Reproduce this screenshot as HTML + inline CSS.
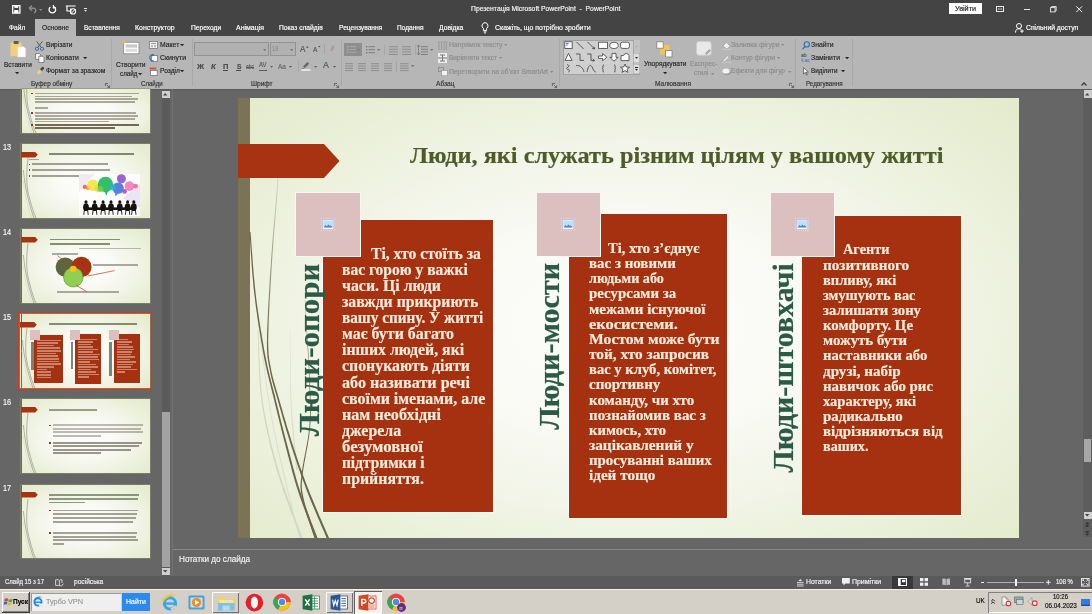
<!DOCTYPE html><html><head><meta charset="utf-8"><title>PowerPoint</title><style>
html,body{margin:0;padding:0}
body{width:1092px;height:614px;overflow:hidden;position:relative;background:#666;font-family:"Liberation Sans",sans-serif}
.a{position:absolute}
.t{position:absolute;white-space:nowrap;transform-origin:0 50%;-webkit-text-stroke:.18px currentColor}
svg{position:absolute;overflow:visible}
</style></head><body><div class="a" style="left:0px;top:0px;width:1092px;height:36px;background:#444;"></div><div class="a" style="left:0px;top:36px;width:1092px;height:52.5px;background:#b6b6b6;"></div><div class="a" style="left:35px;top:19px;width:41.3px;height:17.5px;background:#b6b6b6;"></div><div class="a" style="left:0px;top:88.5px;width:1092px;height:1px;background:#5a5a5a;"></div><div class="a" style="left:161.5px;top:89px;width:8px;height:487px;background:#5b5b5b;"></div><div class="a" style="left:161.5px;top:412px;width:8px;height:155px;background:#a2a2a2;"></div><div class="a" style="left:171.5px;top:89px;width:1.5px;height:487px;background:#727272;"></div><div class="a" style="left:1083px;top:89px;width:8.5px;height:448px;background:#5d5d5d;"></div><div class="a" style="left:1083.5px;top:439px;width:7.5px;height:23px;background:#a8a8a8;"></div><div class="a" style="left:173px;top:549px;width:919px;height:1px;background:#8a8a8a;"></div><div class="a" style="left:0px;top:576px;width:1092px;height:13px;background:#5a5a5a;"></div><div class="a" style="left:0px;top:589px;width:1092px;height:25px;background:#d4d0c8;"></div><div class="a" style="left:0px;top:589px;width:1092px;height:1px;background:#f4f2ee;"></div><div class="a" id="slide" style="left:238px;top:98px;width:781px;height:440px;overflow:hidden;background:radial-gradient(ellipse 60% 62% at 50% 52%,#fcfcfa 0%,#fafbf6 35%,#f1f4e6 68%,#e8eed4 100%,#e2e9c8 125%)"><div class="a" style="left:0;top:0;width:12px;height:440px;background:#7a7356"></div><svg style="left:0;top:0" width="781" height="440"><polygon points="19.7,232.0 19.8,234.9 19.9,238.4 20.0,242.4 20.1,247.0 20.2,251.9 20.4,257.2 20.6,262.8 20.8,268.5 21.1,274.3 21.4,280.1 21.8,285.9 22.2,291.5 22.8,297.0 23.4,302.1 24.1,307.0 24.9,311.9 25.7,316.8 26.6,321.7 27.5,326.5 28.5,331.4 29.6,336.2 30.7,341.1 31.8,345.9 33.0,350.7 34.3,355.6 35.5,360.5 36.9,365.3 38.2,370.2 39.7,375.3 41.4,380.6 43.2,386.1 45.0,391.7 47.0,397.4 49.0,403.0 51.0,408.5 52.9,413.9 54.8,419.1 56.6,424.0 58.3,428.5 59.8,432.7 61.1,436.3 62.1,439.3 62.9,441.8 63.5,443.7 64.0,445.2 64.3,446.2 64.4,446.9 64.5,447.2 64.5,447.0 65.9,446.4 66.1,446.5 66.1,446.4 65.9,446.3 65.7,445.9 63.9,446.8 63.9,447.2 66.1,446.8 66.1,446.9 64.4,447.7 64.3,447.6 64.4,447.7 64.5,447.9 65.0,448.3 66.5,447.6 66.5,447.0 66.4,446.5 66.2,445.7 65.9,444.6 65.4,443.1 64.7,441.2 63.9,438.7 62.8,435.6 61.5,432.0 60.0,427.9 58.3,423.4 56.5,418.5 54.6,413.3 52.6,408.0 50.6,402.4 48.6,396.8 46.6,391.1 44.7,385.6 42.9,380.1 41.3,374.8 39.8,369.8 38.4,364.9 37.0,360.0 35.7,355.2 34.5,350.4 33.2,345.5 32.1,340.7 30.9,335.9 29.9,331.1 28.8,326.3 27.9,321.4 27.0,316.6 26.1,311.7 25.3,306.8 24.6,301.9 24.0,296.8 23.4,291.4 22.9,285.8 22.5,280.1 22.1,274.2 21.8,268.4 21.5,262.7 21.3,257.2 21.1,251.9 21.0,246.9 20.8,242.4 20.6,238.3 20.5,234.8 20.3,232.0" fill="#cdd1bd" opacity="0.85"/><polygon points="12.8,148.0 13.0,150.2 13.2,152.9 13.5,156.1 13.8,159.6 14.1,163.5 14.5,167.6 14.9,171.9 15.3,176.3 15.7,180.8 16.1,185.3 16.5,189.7 16.9,194.1 17.3,198.2 17.7,202.0 18.1,205.7 18.5,209.2 18.8,212.7 19.2,216.0 19.6,219.4 20.0,222.7 20.3,226.0 20.7,229.4 21.2,232.9 21.6,236.4 22.1,240.1 22.5,243.9 23.1,247.9 23.6,252.1 24.2,256.4 24.7,260.9 25.3,265.5 25.9,270.3 26.5,275.2 27.1,280.1 27.8,285.2 28.5,290.3 29.2,295.5 30.0,300.8 30.8,306.1 31.6,311.4 32.5,316.7 33.5,322.1 34.6,327.6 35.7,333.4 37.0,339.3 38.3,345.5 39.6,351.7 41.0,357.9 42.5,364.1 43.9,370.3 45.3,376.2 46.7,382.0 48.0,387.6 49.2,392.8 50.4,397.7 51.4,402.1 52.4,406.2 53.3,410.1 54.3,413.8 55.1,417.2 56.0,420.4 56.7,423.4 57.5,426.2 58.2,428.8 58.9,431.1 59.5,433.3 60.0,435.3 60.5,437.1 60.9,438.7 61.3,440.2 62.7,439.8 62.3,438.4 61.8,436.7 61.3,434.9 60.8,433.0 60.1,430.8 59.5,428.4 58.8,425.8 58.0,423.1 57.2,420.1 56.3,416.9 55.5,413.5 54.5,409.8 53.6,406.0 52.6,401.9 51.5,397.4 50.3,392.6 49.1,387.3 47.8,381.8 46.4,376.0 45.0,370.0 43.5,363.9 42.1,357.7 40.7,351.4 39.3,345.2 38.0,339.1 36.7,333.2 35.6,327.4 34.5,321.9 33.5,316.6 32.6,311.2 31.7,305.9 30.9,300.6 30.1,295.4 29.4,290.2 28.7,285.1 28.0,280.0 27.4,275.1 26.8,270.2 26.2,265.4 25.6,260.8 25.0,256.3 24.4,251.9 23.8,247.8 23.3,243.8 22.8,240.0 22.3,236.3 21.9,232.8 21.5,229.3 21.0,226.0 20.6,222.6 20.2,219.3 19.9,216.0 19.5,212.6 19.1,209.1 18.7,205.6 18.3,202.0 17.9,198.1 17.5,194.0 17.0,189.7 16.6,185.3 16.2,180.8 15.8,176.3 15.4,171.9 15.0,167.6 14.6,163.4 14.3,159.6 13.9,156.1 13.7,152.9 13.4,150.2 13.2,148.0" fill="#d8dbcb" opacity="0.8"/><polygon points="51.9,232.0 51.9,234.9 51.9,238.6 51.9,242.9 51.9,247.8 52.0,253.1 52.0,258.7 52.1,264.5 52.1,270.4 52.2,276.3 52.2,282.2 52.3,287.7 52.4,293.0 52.5,297.8 52.6,302.0 52.8,305.8 52.9,309.4 53.1,312.8 53.3,315.9 53.5,318.9 53.7,321.8 53.9,324.5 54.1,327.2 54.3,329.7 54.6,332.2 54.8,334.7 55.0,337.1 55.2,339.6 55.4,342.1 55.6,344.6 55.8,347.1 56.1,349.7 56.3,352.2 56.5,354.7 56.8,357.2 57.0,359.6 57.2,361.8 57.4,364.0 57.6,366.0 57.8,367.8 58.0,369.5 58.1,370.9 58.2,372.1 59.8,371.9 59.7,370.7 59.5,369.3 59.3,367.7 59.1,365.8 58.9,363.8 58.6,361.7 58.4,359.4 58.1,357.1 57.9,354.6 57.6,352.1 57.3,349.6 57.1,347.0 56.8,344.5 56.6,341.9 56.3,339.5 56.1,337.0 55.9,334.6 55.6,332.1 55.4,329.6 55.1,327.1 54.8,324.5 54.6,321.7 54.4,318.9 54.1,315.9 53.9,312.7 53.7,309.4 53.5,305.8 53.4,302.0 53.2,297.7 53.1,293.0 53.0,287.7 52.8,282.1 52.7,276.3 52.7,270.4 52.6,264.5 52.5,258.7 52.4,253.1 52.4,247.8 52.3,242.9 52.3,238.6 52.2,234.9 52.1,232.0" fill="#d3d7c6" opacity="0.8"/><polygon points="66.9,202.0 67.0,205.3 67.3,209.5 67.6,214.5 67.9,220.0 68.3,226.0 68.6,232.4 69.0,239.1 69.4,245.8 69.8,252.6 70.1,259.2 70.5,265.6 70.8,271.6 71.0,277.1 71.2,282.0 71.4,286.4 71.5,290.4 71.6,294.2 71.8,297.8 71.9,301.2 71.9,304.4 72.0,307.5 72.0,310.5 72.0,313.5 72.0,316.5 71.9,319.4 71.7,322.5 71.5,325.7 71.3,329.0 70.9,332.4 70.5,336.0 70.0,339.6 69.4,343.3 68.7,347.0 68.0,350.7 67.3,354.4 66.6,358.0 65.9,361.6 65.3,365.0 64.7,368.3 64.2,371.4 63.7,374.3 63.4,376.9 63.2,379.3 63.0,381.4 62.8,383.2 62.7,384.9 62.6,386.4 62.5,387.8 62.5,389.1 62.6,390.4 62.7,391.7 62.8,393.1 63.0,394.6 63.3,396.2 63.7,398.1 64.1,400.2 64.6,402.5 65.3,405.2 66.1,408.1 67.0,411.1 68.0,414.2 69.0,417.5 70.0,420.7 71.1,423.9 72.1,427.0 73.1,429.9 74.0,432.7 74.8,435.2 75.6,437.4 76.2,439.3 76.7,440.8 77.1,442.1 77.5,443.2 77.8,444.1 78.0,444.8 78.2,445.4 78.4,445.8 78.6,446.2 78.7,446.4 78.8,446.6 78.9,446.8 78.9,447.0 79.0,447.1 79.1,447.4 80.9,446.6 80.8,446.4 80.7,446.1 80.6,445.9 80.5,445.8 80.4,445.6 80.3,445.4 80.1,445.1 79.9,444.7 79.7,444.1 79.5,443.5 79.1,442.6 78.8,441.6 78.3,440.3 77.8,438.7 77.2,436.9 76.4,434.6 75.6,432.1 74.6,429.4 73.6,426.4 72.6,423.4 71.5,420.2 70.5,417.0 69.4,413.8 68.4,410.7 67.5,407.7 66.7,404.8 66.0,402.2 65.5,399.8 65.1,397.8 64.7,396.0 64.4,394.4 64.2,392.9 64.0,391.6 63.9,390.3 63.8,389.0 63.8,387.8 63.8,386.4 63.9,385.0 64.0,383.3 64.2,381.5 64.4,379.4 64.6,377.1 64.9,374.4 65.3,371.5 65.8,368.4 66.3,365.2 67.0,361.8 67.6,358.2 68.3,354.6 69.0,350.9 69.7,347.2 70.3,343.4 70.9,339.7 71.4,336.1 71.8,332.5 72.1,329.0 72.4,325.7 72.5,322.5 72.7,319.5 72.7,316.5 72.8,313.5 72.8,310.5 72.7,307.5 72.7,304.4 72.6,301.2 72.4,297.8 72.3,294.2 72.1,290.4 72.0,286.4 71.8,282.0 71.6,277.1 71.3,271.6 71.0,265.6 70.6,259.2 70.3,252.6 69.9,245.8 69.5,239.0 69.0,232.4 68.7,226.0 68.3,220.0 67.9,214.4 67.6,209.5 67.4,205.3 67.1,202.0" fill="#6b6649" opacity="1"/><polygon points="11.5,134.0 11.7,136.6 11.9,139.6 12.1,143.2 12.3,147.2 12.6,151.6 12.9,156.3 13.3,161.2 13.6,166.2 14.0,171.4 14.4,176.5 14.9,181.7 15.3,186.7 15.8,191.5 16.3,196.1 16.9,200.6 17.4,205.1 18.0,209.7 18.7,214.3 19.3,219.0 20.0,223.6 20.7,228.2 21.5,232.8 22.2,237.3 22.9,241.7 23.7,246.0 24.4,250.2 25.1,254.3 25.8,258.1 26.5,261.8 27.3,265.4 28.0,268.8 28.7,272.0 29.4,275.2 30.2,278.2 30.9,281.2 31.6,284.2 32.4,287.1 33.1,290.1 33.9,293.0 34.6,296.0 35.4,299.1 36.2,302.2 36.9,305.4 37.7,308.6 38.5,311.9 39.3,315.1 40.1,318.4 40.9,321.6 41.7,324.9 42.5,328.1 43.3,331.4 44.1,334.7 45.0,338.0 45.8,341.2 46.7,344.5 47.5,347.7 48.3,351.0 49.2,354.2 50.0,357.5 50.9,360.7 51.7,364.0 52.6,367.2 53.4,370.5 54.3,373.7 55.2,377.0 56.1,380.2 57.0,383.5 58.0,386.8 59.0,390.0 60.1,393.3 61.2,396.7 62.4,400.2 63.7,403.8 65.0,407.6 66.4,411.3 67.8,415.0 69.1,418.7 70.5,422.3 71.8,425.7 73.1,429.0 74.2,432.0 75.3,434.8 76.2,437.3 77.0,439.4 77.7,441.1 78.2,442.6 78.6,443.7 79.0,444.7 79.2,445.4 79.4,445.9 79.6,446.3 79.7,446.5 79.7,446.7 79.8,446.8 79.8,446.9 79.8,447.0 79.9,447.2 80.0,447.4 82.0,446.6 81.9,446.4 81.9,446.2 81.8,446.1 81.8,446.0 81.7,445.9 81.7,445.7 81.6,445.5 81.4,445.1 81.2,444.6 81.0,443.9 80.6,443.0 80.2,441.8 79.6,440.4 79.0,438.6 78.2,436.5 77.2,434.0 76.2,431.3 75.0,428.2 73.7,425.0 72.4,421.6 71.1,418.0 69.7,414.3 68.3,410.6 66.9,406.9 65.5,403.2 64.3,399.5 63.1,396.0 61.9,392.7 60.9,389.4 59.9,386.2 58.9,382.9 58.0,379.7 57.1,376.5 56.2,373.2 55.3,370.0 54.4,366.7 53.6,363.5 52.7,360.2 51.9,357.0 51.0,353.8 50.2,350.5 49.3,347.3 48.4,344.0 47.6,340.8 46.7,337.5 45.9,334.2 45.1,331.0 44.3,327.7 43.4,324.4 42.6,321.2 41.8,317.9 41.0,314.7 40.2,311.4 39.4,308.2 38.6,305.0 37.8,301.8 37.1,298.6 36.3,295.6 35.5,292.6 34.7,289.6 34.0,286.7 33.2,283.8 32.5,280.8 31.7,277.8 31.0,274.8 30.3,271.7 29.5,268.4 28.8,265.1 28.1,261.5 27.4,257.9 26.6,254.0 25.9,250.0 25.2,245.8 24.4,241.5 23.7,237.1 22.9,232.6 22.2,228.0 21.5,223.4 20.8,218.8 20.1,214.1 19.4,209.5 18.8,204.9 18.2,200.4 17.7,195.9 17.2,191.4 16.7,186.5 16.2,181.5 15.7,176.4 15.3,171.3 14.9,166.1 14.5,161.1 14.2,156.2 13.8,151.5 13.5,147.2 13.2,143.1 13.0,139.6 12.7,136.5 12.5,134.0" fill="#6b6649" opacity="1"/><defs><linearGradient id="gA" gradientUnits="userSpaceOnUse" x1="0" y1="80" x2="0" y2="250"><stop offset="0" stop-color="#cfd2c0"/><stop offset="1" stop-color="#6b6649"/></linearGradient></defs><polygon points="40.8,52.0 40.7,53.3 40.6,54.7 40.6,56.2 40.5,57.9 40.5,59.8 40.4,61.8 40.3,64.1 40.2,66.5 40.1,69.1 40.0,72.0 39.8,75.1 39.7,78.5 39.4,82.1 39.2,86.0 38.9,90.2 38.5,94.9 38.1,100.0 37.7,105.3 37.2,110.9 36.7,116.8 36.2,122.8 35.6,128.9 35.1,135.0 34.6,141.2 34.1,147.4 33.7,153.4 33.2,159.3 32.9,165.0 32.5,170.6 32.1,176.5 31.7,182.4 31.4,188.5 31.0,194.5 30.7,200.6 30.3,206.5 30.0,212.4 29.8,218.0 29.5,223.5 29.3,228.6 29.1,233.5 29.0,237.9 29.0,242.0 28.9,245.6 29.0,248.8 29.0,251.6 29.1,254.0 29.3,256.2 29.4,258.2 29.6,260.0 29.9,261.7 30.1,263.3 30.4,264.9 30.7,266.6 31.0,268.3 31.4,270.1 31.8,272.1 32.2,274.3 32.6,276.3 33.0,278.3 33.5,280.3 34.0,282.3 34.5,284.2 35.1,286.2 35.7,288.3 36.3,290.4 36.9,292.5 37.6,294.8 38.2,297.1 39.0,299.6 39.7,302.2 40.5,305.0 41.3,307.9 42.2,311.0 43.1,314.1 44.0,317.3 44.9,320.7 45.9,324.0 46.9,327.4 47.9,330.9 48.9,334.3 50.0,337.7 51.0,341.1 52.1,344.5 53.1,347.8 54.2,351.0 55.2,354.3 56.3,357.5 57.4,360.8 58.5,364.0 59.6,367.3 60.7,370.5 61.9,373.8 63.0,377.0 64.2,380.3 65.4,383.6 66.6,386.8 67.8,390.1 69.1,393.4 70.4,396.7 71.8,400.3 73.3,403.9 74.8,407.6 76.4,411.3 78.0,415.1 79.5,418.8 81.1,422.3 82.5,425.8 83.9,429.0 85.3,432.1 86.5,434.8 87.5,437.3 88.4,439.4 89.2,441.2 89.8,442.6 90.3,443.8 90.7,444.7 91.0,445.4 91.2,446.0 91.4,446.4 91.5,446.6 91.6,446.8 91.7,447.0 91.8,447.1 91.8,447.1 91.9,447.3 92.0,447.5 94.0,446.5 93.9,446.3 93.8,446.1 93.7,445.9 93.7,445.8 93.6,445.7 93.5,445.6 93.4,445.4 93.2,445.0 93.0,444.5 92.7,443.8 92.3,442.9 91.8,441.8 91.1,440.3 90.4,438.6 89.5,436.5 88.4,434.0 87.2,431.2 85.9,428.2 84.5,424.9 83.0,421.5 81.4,417.9 79.9,414.3 78.3,410.6 76.7,406.8 75.2,403.1 73.7,399.5 72.2,396.0 70.9,392.6 69.7,389.4 68.4,386.1 67.2,382.9 66.0,379.6 64.8,376.4 63.7,373.1 62.5,369.9 61.4,366.7 60.3,363.4 59.2,360.2 58.1,356.9 57.0,353.7 55.9,350.5 54.9,347.2 53.8,343.9 52.8,340.6 51.7,337.2 50.7,333.8 49.6,330.4 48.6,326.9 47.6,323.5 46.6,320.2 45.6,316.9 44.7,313.6 43.8,310.5 42.9,307.5 42.1,304.5 41.3,301.8 40.5,299.2 39.8,296.7 39.1,294.3 38.4,292.1 37.8,289.9 37.2,287.8 36.6,285.8 36.0,283.8 35.5,281.9 35.0,279.9 34.5,278.0 34.1,276.0 33.6,274.0 33.2,271.9 32.8,269.8 32.5,268.0 32.1,266.3 31.8,264.7 31.5,263.1 31.2,261.5 31.0,259.8 30.8,258.1 30.6,256.1 30.5,254.0 30.4,251.5 30.3,248.7 30.2,245.6 30.2,242.0 30.3,238.0 30.4,233.5 30.6,228.7 30.7,223.5 31.0,218.1 31.2,212.4 31.5,206.6 31.8,200.6 32.2,194.6 32.5,188.5 32.9,182.5 33.2,176.6 33.6,170.7 33.9,165.0 34.3,159.3 34.7,153.5 35.2,147.4 35.6,141.3 36.1,135.1 36.6,129.0 37.1,122.9 37.6,116.9 38.1,111.0 38.6,105.4 39.0,100.0 39.4,95.0 39.7,90.3 40.0,86.0 40.3,82.1 40.5,78.5 40.6,75.1 40.8,72.0 40.9,69.2 41.0,66.5 41.0,64.1 41.1,61.8 41.1,59.8 41.2,57.9 41.2,56.2 41.2,54.7 41.2,53.3 41.2,52.0" fill="url(#gA)" opacity="1"/></svg><svg style="left:0;top:46px" width="102" height="34"><polygon points="0,0 86,0 101.5,17 86,34 0,34" fill="#a83312"/></svg><div class="a" style="left:85px;top:122px;width:170px;height:292px;background:#a63110;box-shadow:0 0 0 1px rgba(255,255,255,.75)"></div><div class="a" style="left:330.5px;top:116px;width:158.5px;height:304px;background:#a63110;box-shadow:0 0 0 1px rgba(255,255,255,.75)"></div><div class="a" style="left:564px;top:117.5px;width:159px;height:299.5px;background:#a63110;box-shadow:0 0 0 1px rgba(255,255,255,.75)"></div><div class="a" style="left:58px;top:95px;width:63.5px;height:62.5px;background:#dcc0c0;box-shadow:0 0 0 1px #fbf6f2"></div><svg style="left:82.5px;top:119.6px" width="14" height="13"><rect x="0.4" y="0.4" width="13.2" height="12.2" fill="none" stroke="#ece4ea" stroke-width="0.7" stroke-dasharray="1 1"/><rect x="1.4" y="1.6" width="11.4" height="10" fill="#f6f8fc" stroke="#b9b3c6" stroke-width="0.6"/><rect x="2.2" y="2.4" width="9.8" height="7" fill="#bfe0fa"/><path d="M2.6,9.4 L4.6,7 L5.8,8.2 L7.4,6.6 L8.6,8 L9.6,7.2 L11.6,9.4 Z" fill="#4a86cc"/></svg><div class="a" style="left:298.5px;top:95px;width:63.5px;height:62.5px;background:#dcc0c0;box-shadow:0 0 0 1px #fbf6f2"></div><svg style="left:323.0px;top:119.6px" width="14" height="13"><rect x="0.4" y="0.4" width="13.2" height="12.2" fill="none" stroke="#ece4ea" stroke-width="0.7" stroke-dasharray="1 1"/><rect x="1.4" y="1.6" width="11.4" height="10" fill="#f6f8fc" stroke="#b9b3c6" stroke-width="0.6"/><rect x="2.2" y="2.4" width="9.8" height="7" fill="#bfe0fa"/><path d="M2.6,9.4 L4.6,7 L5.8,8.2 L7.4,6.6 L8.6,8 L9.6,7.2 L11.6,9.4 Z" fill="#4a86cc"/></svg><div class="a" style="left:532.5px;top:95px;width:63.5px;height:62.5px;background:#dcc0c0;box-shadow:0 0 0 1px #fbf6f2"></div><svg style="left:557.0px;top:119.6px" width="14" height="13"><rect x="0.4" y="0.4" width="13.2" height="12.2" fill="none" stroke="#ece4ea" stroke-width="0.7" stroke-dasharray="1 1"/><rect x="1.4" y="1.6" width="11.4" height="10" fill="#f6f8fc" stroke="#b9b3c6" stroke-width="0.6"/><rect x="2.2" y="2.4" width="9.8" height="7" fill="#bfe0fa"/><path d="M2.6,9.4 L4.6,7 L5.8,8.2 L7.4,6.6 L8.6,8 L9.6,7.2 L11.6,9.4 Z" fill="#4a86cc"/></svg></div><div class="a" style="left:949px;top:3px;width:33px;height:11px;background:#fff;"></div><svg style="left:12.2px;top:5px" width="9" height="9"><path d="M0.7,0.7h7.2v7.4h-7.2z" fill="none" stroke="#fff" stroke-width="1.3"/><rect x="2.4" y="0.7" width="3.8" height="2.2" fill="#fff"/><rect x="2.2" y="5" width="4.2" height="3" fill="#fff"/></svg><svg style="left:28px;top:5px" width="10" height="8"><path d="M1,3.2 L4,0.6 M1,3.2 L4,5.8 M1,3.2 H6.2 A2.6,2.6 0 0 1 6.2,8" fill="none" stroke="#8a8a8a" stroke-width="1.4"/></svg><svg style="left:39.3px;top:9.0px" width="3.4" height="2"><polygon points="0,0 3.4,0 1.7,2" fill="#8a8a8a"/></svg><svg style="left:48.3px;top:5px" width="9" height="9"><path d="M2.4,2 A3.3,3.3 0 1 0 5.6,1.6" fill="none" stroke="#fff" stroke-width="1.3"/><path d="M5.4,0 V2.8 H8" fill="none" stroke="#fff" stroke-width="1.2"/></svg><svg style="left:64.6px;top:5.4px" width="11" height="9"><path d="M0.8,1 H10.6 M2,1 V6 H6.5 M5.6,3.6 V8.6" fill="none" stroke="#fff" stroke-width="1.2"/><circle cx="8" cy="6.4" r="2.6" fill="none" stroke="#fff" stroke-width="1.1"/><path d="M6,8.6 L10.4,4" stroke="#fff" stroke-width="1"/></svg><div class="a" style="left:84.3px;top:8px;width:3px;height:0.9px;background:#e8e8e8;"></div><svg style="left:84.3px;top:9.799999999999999px" width="3" height="1.8"><polygon points="0,0 3,0 1.5,1.8" fill="#e8e8e8"/></svg><svg style="left:481px;top:22px" width="8" height="12"><path d="M4,0.7 A3.1,3.1 0 0 1 5.6,6.4 V8.4 H2.4 V6.4 A3.1,3.1 0 0 1 4,0.7 Z" fill="none" stroke="#fff" stroke-width="1"/><path d="M2.6,9.8 H5.4 M3,11 H5" stroke="#fff" stroke-width="0.9"/></svg><svg style="left:996px;top:5.8px" width="8" height="6"><rect x="0.5" y="0.5" width="7" height="5" fill="none" stroke="#ececec" stroke-width="1"/><path d="M1.8,3 L3.3,1.9 V4.1 Z M6.2,3 L4.7,1.9 V4.1Z" fill="#ececec"/></svg><div class="a" style="left:1024px;top:9px;width:6px;height:1px;background:#e8e8e8;"></div><svg style="left:1049.6px;top:6px" width="7" height="6.4"><rect x="0.5" y="1.6" width="4.6" height="4.3" fill="none" stroke="#e8e8e8" stroke-width="0.9"/><path d="M1.7,1.6 V0.5 H6.2 V4.8 H5.1" fill="none" stroke="#e8e8e8" stroke-width="0.9"/></svg><svg style="left:1075.6px;top:6px" width="6.4" height="6.4"><path d="M0.3,0.3 L6.1,6.1 M6.1,0.3 L0.3,6.1" stroke="#f0f0f0" stroke-width="1"/></svg><svg style="left:1015px;top:22.5px" width="9" height="10"><circle cx="4" cy="3" r="2.5" fill="none" stroke="#fff" stroke-width="1"/><path d="M0.5,9.6 C0.5,6.6 2,5.8 4,5.8 C5,5.8 5.6,6 6,6.4" fill="none" stroke="#fff" stroke-width="1"/><path d="M7,6.4 V9.8 M5.3,8.1 H8.7" stroke="#fff" stroke-width="1"/></svg><svg style="left:1080.5px;top:82px" width="6" height="4"><path d="M0.5,3.5 L3,0.8 L5.5,3.5" fill="none" stroke="#333" stroke-width="1.2"/></svg><div class="a" style="left:111px;top:39px;width:1px;height:47px;background:#a8a8a8;"></div><div class="a" style="left:191.5px;top:39px;width:1px;height:47px;background:#a8a8a8;"></div><div class="a" style="left:341px;top:39px;width:1px;height:47px;background:#a8a8a8;"></div><div class="a" style="left:558.5px;top:39px;width:1px;height:47px;background:#a8a8a8;"></div><div class="a" style="left:795px;top:39px;width:1px;height:47px;background:#a8a8a8;"></div><div class="a" style="left:852px;top:39px;width:1px;height:47px;background:#a8a8a8;"></div><svg style="left:15.4px;top:72.30000000000001px" width="4.2" height="2.2"><polygon points="0,0 4.2,0 2.1,2.2" fill="#262626"/></svg><svg style="left:83.4px;top:57.199999999999996px" width="4.2" height="2.2"><polygon points="0,0 4.2,0 2.1,2.2" fill="#262626"/></svg><svg style="left:105px;top:82.5px" width="5" height="5"><path d="M0.4,3 V0.4 H3" fill="none" stroke="#555" stroke-width="0.8"/><path d="M1.8,1.8 L4.6,4.6 M4.6,2.4 V4.6 H2.4" fill="none" stroke="#555" stroke-width="0.8"/></svg><svg style="left:9px;top:40px" width="18" height="18"><rect x="1.5" y="2.6" width="11" height="13.6" rx="1" fill="#f3cf7a"/><rect x="4.6" y="1" width="5" height="3" rx="1" fill="#6b5a3a"/><path d="M8.6,6.4 H14.4 L16.6,8.6 V17 H8.6 Z" fill="#fff" stroke="#d8d8d8" stroke-width="0.5"/></svg><svg style="left:35px;top:40.5px" width="9" height="10"><path d="M1.6,0.4 L6.2,6.4 M7.4,0.4 L2.8,6.4" stroke="#5a5a5a" stroke-width="1"/><circle cx="2" cy="7.8" r="1.6" fill="none" stroke="#3a6fb0" stroke-width="1"/><circle cx="7" cy="7.8" r="1.6" fill="none" stroke="#3a6fb0" stroke-width="1"/></svg><svg style="left:34.5px;top:53px" width="10" height="10"><path d="M0.6,0.6 H4.4 L5.8,2 V6.4 H0.6 Z" fill="#fff" stroke="#666" stroke-width="0.8"/><path d="M3.8,3.2 H7.6 L9,4.6 V9.4 H3.8 Z" fill="#fff" stroke="#666" stroke-width="0.8"/></svg><svg style="left:35.5px;top:66px" width="9" height="10"><path d="M0.6,6.4 L3.2,3.8 L5.4,6 L2.8,8.6 Z" fill="#f3cf7a"/><path d="M4,3 L6.8,0.6 L8.4,2.2 L6,5 Z" fill="#444"/></svg><svg style="left:138.20000000000002px;top:72.9px" width="4.2" height="2.2"><polygon points="0,0 4.2,0 2.1,2.2" fill="#262626"/></svg><svg style="left:179.70000000000002px;top:44.199999999999996px" width="4.2" height="2.2"><polygon points="0,0 4.2,0 2.1,2.2" fill="#262626"/></svg><svg style="left:180.20000000000002px;top:70.4px" width="4.2" height="2.2"><polygon points="0,0 4.2,0 2.1,2.2" fill="#262626"/></svg><svg style="left:121.5px;top:40px" width="18" height="15"><rect x="1.6" y="2.2" width="15.4" height="11.6" fill="#fff" stroke="#8e8e8e" stroke-width="0.9"/><rect x="3.6" y="4.4" width="11.4" height="3.2" fill="#c9c9c9"/><rect x="3.6" y="8.8" width="11.4" height="3" fill="#dcdcdc"/><path d="M2,0 V4 M0,2 H4" stroke="#f0b94a" stroke-width="1.2"/></svg><svg style="left:149px;top:40.5px" width="9" height="8"><rect x="0.5" y="0.5" width="8" height="7" fill="#fff" stroke="#777" stroke-width="0.8"/><rect x="1.8" y="1.8" width="5.4" height="1.4" fill="#999"/><rect x="1.8" y="4" width="2.2" height="2.4" fill="#bbb"/><rect x="5" y="4" width="2.2" height="2.4" fill="#bbb"/></svg><svg style="left:149px;top:53.5px" width="9" height="8"><rect x="2.4" y="1.6" width="6.2" height="5.8" fill="#fff" stroke="#777" stroke-width="0.8"/><path d="M4.4,0.8 A3,3 0 1 0 4.6,6.6" fill="none" stroke="#2f6fb5" stroke-width="1.2"/><path d="M3,0 L5.4,0.8 L3.6,2.6Z" fill="#2f6fb5"/></svg><svg style="left:149px;top:66.5px" width="9" height="9"><rect x="0.5" y="0.5" width="6.8" height="2" fill="#d3562e"/><rect x="1.4" y="3.4" width="6.8" height="5" fill="#fff" stroke="#777" stroke-width="0.8"/></svg><div class="a" style="left:194px;top:42px;width:75px;height:13.5px;background:#b1b1b1;box-shadow:inset 0 0 0 1px #939393"></div><div class="a" style="left:270px;top:42px;width:25.5px;height:13.5px;background:#b1b1b1;box-shadow:inset 0 0 0 1px #939393"></div><svg style="left:263.3px;top:48.75px" width="3.4" height="1.9"><polygon points="0,0 3.4,0 1.7,1.9" fill="#777"/></svg><svg style="left:289.6px;top:48.75px" width="3.4" height="1.9"><polygon points="0,0 3.4,0 1.7,1.9" fill="#777"/></svg><svg style="left:305.6px;top:45.6px" width="2.6" height="1.8"><polygon points="0,1.8 1.3,0 2.6,1.8" fill="#555"/></svg><svg style="left:317.7px;top:45.7px" width="2.6" height="1.6"><polygon points="0,0 2.6,0 1.3,1.6" fill="#555"/></svg><div class="a" style="left:323.6px;top:44px;width:0.8px;height:10px;background:#a6a6a6;"></div><svg style="left:328.5px;top:44.6px" width="7" height="7"><path d="M1,5.4 L3.6,0.4 L5.2,0.4 L3.4,5.4 Z" fill="#9b9b9b"/><path d="M2.4,6.4 L6,2.6" stroke="#c99" stroke-width="1"/></svg><div class="a" style="left:223px;top:70px;width:5.4px;height:0.8px;background:#4c4c4c;"></div><div class="a" style="left:236.4px;top:70px;width:5px;height:0.8px;background:#4c4c4c;"></div><div class="a" style="left:246.4px;top:66.8px;width:8.1px;height:0.7px;background:#5c5c5c;"></div><div class="a" style="left:259.4px;top:69.6px;width:7.6px;height:0.7px;background:#5c5c5c;"></div><svg style="left:269.7px;top:65.69999999999999px" width="3.2" height="1.8"><polygon points="0,0 3.2,0 1.6,1.8" fill="#5c5c5c"/></svg><svg style="left:288.79999999999995px;top:65.69999999999999px" width="3.2" height="1.8"><polygon points="0,0 3.2,0 1.6,1.8" fill="#5c5c5c"/></svg><div class="a" style="left:298px;top:61px;width:0.8px;height:11px;background:#a6a6a6;"></div><svg style="left:301.4px;top:61px" width="10" height="10"><path d="M2,5.4 L6.4,1 L8.2,2.8 L3.8,7.2 Z" fill="#6a6a6a"/><path d="M1.4,6.4 L3,7.8 L1,8.2Z" fill="#6a6a6a"/><rect x="0.4" y="8.2" width="9" height="1.7" fill="#ececec"/></svg><svg style="left:314.0px;top:65.69999999999999px" width="3.2" height="1.8"><polygon points="0,0 3.2,0 1.6,1.8" fill="#5c5c5c"/></svg><svg style="left:333.2px;top:65.69999999999999px" width="3.2" height="1.8"><polygon points="0,0 3.2,0 1.6,1.8" fill="#5c5c5c"/></svg><svg style="left:334.3px;top:82.5px" width="5" height="5"><path d="M0.4,3 V0.4 H3" fill="none" stroke="#555" stroke-width="0.8"/><path d="M1.8,1.8 L4.6,4.6 M4.6,2.4 V4.6 H2.4" fill="none" stroke="#555" stroke-width="0.8"/></svg><div class="a" style="left:344px;top:43px;width:17.5px;height:12.5px;background:#8f8f8f;"></div><svg style="left:346.5px;top:46px" width="9" height="8.399999999999999"><rect x="0" y="0.0" width="1.4" height="1.4" fill="#a9a9a9"/><path d="M2.6,0.7 H9" stroke="#a9a9a9" stroke-width="0.9"/><rect x="0" y="2.8" width="1.4" height="1.4" fill="#a9a9a9"/><path d="M2.6,3.5 H9" stroke="#a9a9a9" stroke-width="0.9"/><rect x="0" y="5.6" width="1.4" height="1.4" fill="#a9a9a9"/><path d="M2.6,6.3 H9" stroke="#a9a9a9" stroke-width="0.9"/></svg><svg style="left:356.8px;top:48.800000000000004px" width="3" height="1.8"><polygon points="0,0 3,0 1.5,1.8" fill="#777"/></svg><svg style="left:365.5px;top:45.5px" width="9" height="9"><rect x="0" y="0.0" width="1.4" height="1.4" fill="#777"/><path d="M2.6,0.7 H9" stroke="#777" stroke-width="0.9"/><rect x="0" y="3.0" width="1.4" height="1.4" fill="#777"/><path d="M2.6,3.7 H9" stroke="#777" stroke-width="0.9"/><rect x="0" y="6.0" width="1.4" height="1.4" fill="#777"/><path d="M2.6,6.7 H9" stroke="#777" stroke-width="0.9"/></svg><svg style="left:376.90000000000003px;top:48.7px" width="3.4" height="2"><polygon points="0,0 3.4,0 1.7,2" fill="#777"/></svg><svg style="left:388.5px;top:45.5px" width="9" height="10.4"><path d="M0,0.7 H9" stroke="#8a8a8a" stroke-width="0.9"/><path d="M0,3.3000000000000003 H9" stroke="#8a8a8a" stroke-width="0.9"/><path d="M0,5.9 H9" stroke="#8a8a8a" stroke-width="0.9"/><path d="M0,8.5 H9" stroke="#8a8a8a" stroke-width="0.9"/></svg><svg style="left:401.5px;top:45.5px" width="9" height="10.4"><path d="M0,0.7 H9" stroke="#8a8a8a" stroke-width="0.9"/><path d="M0,3.3000000000000003 H9" stroke="#8a8a8a" stroke-width="0.9"/><path d="M0,5.9 H9" stroke="#8a8a8a" stroke-width="0.9"/><path d="M0,8.5 H9" stroke="#8a8a8a" stroke-width="0.9"/></svg><div class="a" style="left:384px;top:44px;width:0.8px;height:11px;background:#a6a6a6;"></div><div class="a" style="left:415px;top:44px;width:0.8px;height:11px;background:#a6a6a6;"></div><div class="a" style="left:396.4px;top:61px;width:0.8px;height:11px;background:#a6a6a6;"></div><svg style="left:421px;top:45.5px" width="7" height="10.4"><path d="M0,0.7 H7" stroke="#777" stroke-width="0.9"/><path d="M0,3.3000000000000003 H7" stroke="#777" stroke-width="0.9"/><path d="M0,5.9 H7" stroke="#777" stroke-width="0.9"/><path d="M0,8.5 H7" stroke="#777" stroke-width="0.9"/></svg><svg style="left:417px;top:45px" width="3" height="10"><path d="M1.5,0 V10 M0,2 L1.5,0 L3,2 M0,8 L1.5,10 L3,8" fill="none" stroke="#777" stroke-width="0.8"/></svg><svg style="left:429.8px;top:48.7px" width="3.4" height="2"><polygon points="0,0 3.4,0 1.7,2" fill="#777"/></svg><svg style="left:344.5px;top:62.5px" width="8" height="9.2"><path d="M0,0.7 H8" stroke="#8a8a8a" stroke-width="0.9"/><path d="M0,3.0 H8" stroke="#8a8a8a" stroke-width="0.9"/><path d="M0,5.3 H8" stroke="#8a8a8a" stroke-width="0.9"/><path d="M0,7.6 H8" stroke="#8a8a8a" stroke-width="0.9"/></svg><svg style="left:358px;top:62.5px" width="8" height="9.2"><path d="M0,0.7 H8" stroke="#8a8a8a" stroke-width="0.9"/><path d="M0,3.0 H8" stroke="#8a8a8a" stroke-width="0.9"/><path d="M0,5.3 H8" stroke="#8a8a8a" stroke-width="0.9"/><path d="M0,7.6 H8" stroke="#8a8a8a" stroke-width="0.9"/></svg><svg style="left:370.5px;top:62.5px" width="8" height="9.2"><path d="M0,0.7 H8" stroke="#8a8a8a" stroke-width="0.9"/><path d="M0,3.0 H8" stroke="#8a8a8a" stroke-width="0.9"/><path d="M0,5.3 H8" stroke="#8a8a8a" stroke-width="0.9"/><path d="M0,7.6 H8" stroke="#8a8a8a" stroke-width="0.9"/></svg><svg style="left:383.5px;top:62.5px" width="8" height="9.2"><path d="M0,0.7 H8" stroke="#8a8a8a" stroke-width="0.9"/><path d="M0,3.0 H8" stroke="#8a8a8a" stroke-width="0.9"/><path d="M0,5.3 H8" stroke="#8a8a8a" stroke-width="0.9"/><path d="M0,7.6 H8" stroke="#8a8a8a" stroke-width="0.9"/></svg><svg style="left:400px;top:62.5px" width="8.5" height="9.2"><path d="M0,0.7 H8.5" stroke="#8a8a8a" stroke-width="0.9"/><path d="M0,3.0 H8.5" stroke="#8a8a8a" stroke-width="0.9"/><path d="M0,5.3 H8.5" stroke="#8a8a8a" stroke-width="0.9"/><path d="M0,7.6 H8.5" stroke="#8a8a8a" stroke-width="0.9"/></svg><svg style="left:411.3px;top:65.3px" width="3.4" height="2"><polygon points="0,0 3.4,0 1.7,2" fill="#777"/></svg><svg style="left:504.3px;top:44.3px" width="3.4" height="2"><polygon points="0,0 3.4,0 1.7,2" fill="#8c8c8c"/></svg><svg style="left:498.5px;top:57.3px" width="3.4" height="2"><polygon points="0,0 3.4,0 1.7,2" fill="#8c8c8c"/></svg><svg style="left:549.5999999999999px;top:70.8px" width="3.4" height="2"><polygon points="0,0 3.4,0 1.7,2" fill="#8c8c8c"/></svg><svg style="left:437.5px;top:40.5px" width="9" height="9"><path d="M1,0 V9 M3.6,0 V9 M6.2,1 V9 M8.4,1 V9" stroke="#969696" stroke-width="0.9"/><path d="M5,1.4 L7.3,0 L9.6,1.4" fill="none" stroke="#969696" stroke-width="0.7"/></svg><svg style="left:437.5px;top:53px" width="9" height="10"><rect x="0" y="0" width="9" height="10" fill="#ededed"/><path d="M2,2 H7 M2,8 H7 M4.5,2 V8" stroke="#777" stroke-width="1"/><rect x="0" y="4" width="9" height="2" fill="#777" opacity=".5"/></svg><svg style="left:437.5px;top:66.5px" width="10" height="9"><rect x="0.4" y="0.4" width="5" height="4" fill="none" stroke="#8a8a8a" stroke-width="0.8"/><rect x="3.6" y="3.4" width="6" height="5.4" fill="#f2f2f2" stroke="#8a8a8a" stroke-width="0.6"/></svg><svg style="left:552px;top:82.5px" width="5" height="5"><path d="M0.4,3 V0.4 H3" fill="none" stroke="#555" stroke-width="0.8"/><path d="M1.8,1.8 L4.6,4.6 M4.6,2.4 V4.6 H2.4" fill="none" stroke="#555" stroke-width="0.8"/></svg><div class="a" style="left:562.5px;top:39.8px;width:77.7px;height:34.8px;background:#cfcfcf;box-shadow:inset 0 0 0 1px #a0a0a0"></div><div class="a" style="left:632.5px;top:40.3px;width:7.2px;height:33.8px;background:#c2c2c2;box-shadow:inset 1px 0 0 #a6a6a6"></div><div class="a" style="left:633px;top:52.5px;width:6.7px;height:10.8px;background:#dedede;box-shadow:inset 0 0 0 .6px #a0a0a0"></div><svg style="left:634.7px;top:57.15px" width="3" height="1.7"><polygon points="0,0 3,0 1.5,1.7" fill="#222"/></svg><div class="a" style="left:633px;top:63.6px;width:6.7px;height:10.5px;background:#dedede;box-shadow:inset 0 0 0 .6px #a0a0a0"></div><svg style="left:634.7px;top:69.15px" width="3" height="1.7"><polygon points="0,0 3,0 1.5,1.7" fill="#222"/></svg><div class="a" style="left:634.7px;top:67.3px;width:3px;height:0.7px;background:#222;"></div><svg style="left:634.7px;top:45.65px" width="3" height="1.7"><polygon points="0,0 3,0 1.5,1.7" fill="#b4b4b4"/></svg><svg style="left:564px;top:40.8px" width="68" height="33">
<rect x="0.8" y="0.8" width="7.4" height="6.6" stroke="#444" stroke-width="0.85" fill="#fff"/><path d="M2,2.6 H4.6 M2,4 H3.6" stroke="#35a" stroke-width="0.8"/>
<path d="M12.6,1 L19.6,8" stroke="#444" stroke-width="0.85" fill="none"/><path d="M23.6,1 L30.6,8 M30.6,8 L28.2,7.4 M30.6,8 L30,5.6" stroke="#444" stroke-width="0.85" fill="none"/>
<rect x="34.6" y="1.2" width="8.8" height="6.2" stroke="#444" stroke-width="0.85" fill="#fff"/><ellipse cx="50" cy="4.4" rx="4.2" ry="3.1" stroke="#444" stroke-width="0.85" fill="#fff"/><rect x="56.6" y="1.2" width="8.8" height="6.2" rx="1.8" stroke="#444" stroke-width="0.85" fill="#fff"/>
<path d="M4.5,12.4 L8,19.4 H1 Z" stroke="#444" stroke-width="0.85" fill="#fff"/><path d="M12,13 H16 V19.4 H20" stroke="#444" stroke-width="0.85" fill="none"/><path d="M23,13 H27 V19.4 H30.4 M30.4,19.4 L28.8,18 M30.4,19.4 L28.8,20.6" stroke="#444" stroke-width="0.85" fill="none"/>
<path d="M34.4,15 H38.6 V12.6 L42.8,16.2 L38.6,19.8 V17.4 H34.4 Z" stroke="#444" stroke-width="0.85" fill="#fff"/><path d="M48,12.4 H52 V16.4 H54.2 L50,20.2 L45.8,16.4 H48 Z" stroke="#444" stroke-width="0.85" fill="#fff"/><path d="M57,14.6 H59.6 A2.8,2.8 0 0 1 65,14.6 V19.6 H57 Z" stroke="#444" stroke-width="0.85" fill="#fff"/>
<path d="M3,23.6 C5.4,23.6 5.4,26 3.6,26.4 C1.8,26.8 3,29 4.6,28.6 C5.8,28.6 5.8,31 4.2,31" stroke="#444" stroke-width="0.85" fill="none"/><path d="M12,24.4 C16.6,24.4 19.2,27 20,31" stroke="#444" stroke-width="0.85" fill="none"/><path d="M23,31 C24.6,23 27,23 28.6,27 C29.6,30 31,31 32,31" stroke="#444" stroke-width="0.85" fill="none"/>
<path d="M40,23.6 C38.6,23.6 39,26 39,26.6 C39,27.2 38.2,27.4 38.2,27.4 C38.2,27.4 39,27.6 39,28.2 C39,29 38.6,31.2 40,31.2" stroke="#444" stroke-width="0.85" fill="none"/><path d="M50,23.6 C51.4,23.6 51,26 51,26.6 C51,27.2 51.8,27.4 51.8,27.4 C51.8,27.4 51,27.6 51,28.2 C51,29 51.4,31.2 50,31.2" stroke="#444" stroke-width="0.85" fill="none"/>
<path d="M61,23 L62.3,26 L65.6,26.2 L63,28.2 L64,31.4 L61,29.6 L58,31.4 L59,28.2 L56.4,26.2 L59.7,26 Z" stroke="#444" stroke-width="0.85" fill="#fff"/></svg><svg style="left:656px;top:40.5px" width="17" height="17"><rect x="4" y="4" width="9.6" height="9.6" fill="#f0c35a"/><rect x="0.8" y="0.8" width="6.4" height="6.4" fill="#fff" stroke="#7d7d7d" stroke-width="0.8"/><rect x="9.6" y="9.6" width="6.4" height="6.4" fill="#fff" stroke="#7d7d7d" stroke-width="0.8"/></svg><svg style="left:662.6px;top:72.30000000000001px" width="4.2" height="2.2"><polygon points="0,0 4.2,0 2.1,2.2" fill="#262626"/></svg><svg style="left:696px;top:41px" width="17" height="16"><rect x="0.6" y="0.6" width="14.6" height="13.6" rx="2.4" fill="#e9e9e9" stroke="#d0d0d0" stroke-width="0.6"/><path d="M9,12.4 L13.4,8 L15,9.6 L10.6,14 Z" fill="#a8a8a8"/></svg><svg style="left:710.8px;top:72.5px" width="3.4" height="2"><polygon points="0,0 3.4,0 1.7,2" fill="#8c8c8c"/></svg><svg style="left:781.0px;top:44.3px" width="3.4" height="2"><polygon points="0,0 3.4,0 1.7,2" fill="#8c8c8c"/></svg><svg style="left:776.9px;top:57.3px" width="3.4" height="2"><polygon points="0,0 3.4,0 1.7,2" fill="#8c8c8c"/></svg><svg style="left:787.5999999999999px;top:70.5px" width="3.4" height="2"><polygon points="0,0 3.4,0 1.7,2" fill="#8c8c8c"/></svg><svg style="left:721.5px;top:40.5px" width="9" height="9"><path d="M1,5 L4.4,1.4 L8,5 L5,8 Z" fill="#efefef" stroke="#9a9a9a" stroke-width="0.6"/><rect x="0" y="7.6" width="9" height="1.6" fill="#c4c4c4"/></svg><svg style="left:721.5px;top:53.5px" width="9" height="9"><path d="M0.8,6.4 L5.6,1.6 L7.2,3.2 L2.4,8 Z" fill="#e4e4e4" stroke="#9a9a9a" stroke-width="0.6"/><rect x="0" y="7.8" width="9" height="1.2" fill="#c4c4c4"/></svg><svg style="left:721.5px;top:66.5px" width="9" height="9"><ellipse cx="4.8" cy="5.2" rx="4" ry="2.8" fill="#9d9d9d"/><ellipse cx="4" cy="4" rx="3.6" ry="2.6" fill="#f1f1f1"/></svg><svg style="left:789px;top:82.5px" width="5" height="5"><path d="M0.4,3 V0.4 H3" fill="none" stroke="#555" stroke-width="0.8"/><path d="M1.8,1.8 L4.6,4.6 M4.6,2.4 V4.6 H2.4" fill="none" stroke="#555" stroke-width="0.8"/></svg><svg style="left:845.4px;top:57.199999999999996px" width="4.2" height="2.2"><polygon points="0,0 4.2,0 2.1,2.2" fill="#262626"/></svg><svg style="left:840.6px;top:70.4px" width="4.2" height="2.2"><polygon points="0,0 4.2,0 2.1,2.2" fill="#262626"/></svg><svg style="left:801.5px;top:40.5px" width="8" height="9"><circle cx="4.8" cy="3.4" r="2.6" fill="none" stroke="#2f6fb5" stroke-width="1.1"/><path d="M3,5.4 L0.6,8.2" stroke="#2f6fb5" stroke-width="1.3"/></svg><svg style="left:800.5px;top:53px" width="9" height="10"><text x="0" y="4.4" font-family="Liberation Sans,sans-serif" font-size="5" fill="#333">ab</text><text x="3.4" y="9.4" font-family="Liberation Sans,sans-serif" font-size="5" fill="#2f6fb5">ac</text><path d="M1,5.4 V8 H2.8" fill="none" stroke="#2f6fb5" stroke-width="0.7"/></svg><svg style="left:802.5px;top:66.5px" width="6" height="9"><path d="M0.6,0.6 V7 L2.2,5.4 L3.4,8.2 L4.4,7.8 L3.2,5 H5.4 Z" fill="#fff" stroke="#444" stroke-width="0.7"/></svg><div class="a" style="left:20.5px;top:89px;width:129.5px;height:43.8px;overflow:hidden;background:radial-gradient(ellipse 60% 62% at 50% 52%,#fcfcfa 0%,#fafbf6 35%,#f1f4e6 68%,#e8eed4 100%,#e2e9c8 125%);box-shadow:0 0 0 0.6px #8d8a6a"><div class="a" style="left:0;top:-29.6px;width:129.5px;height:73.4px"><div class="a" style="left:0.8px;top:0;width:1.2px;height:100%;background:#6f6b52"></div><svg style="left:0;top:0" width="30" height="74" fill="none"><path d="M7,14 C5,30 5,44 9,56 C11,64 13,70 15,74" stroke="#8a866a" stroke-width="0.6"/><path d="M2.4,26 C4,44 8,60 13,74" stroke="#8a866a" stroke-width="0.6"/><path d="M2,36 C4,52 7,64 11,74" stroke="#cfd2c0" stroke-width="0.5"/></svg><svg style="left:0;top:7.6px" width="18" height="6"><polygon points="0,0 14.2,0 16.8,2.8 14.2,5.6 0,5.6" fill="#a83312"/></svg><div class="a" style="left:14px;top:33.1px;width:104px;height:1.7px;background:#5e5a48;opacity:0.5"></div><div class="a" style="left:14px;top:36.1px;width:97px;height:1.7px;background:#5e5a48;opacity:0.5"></div><div class="a" style="left:14px;top:39.0px;width:103px;height:1.7px;background:#5e5a48;opacity:0.5"></div><div class="a" style="left:14px;top:41.900000000000006px;width:100px;height:1.7px;background:#5e5a48;opacity:0.5"></div><div class="a" style="left:14px;top:47.5px;width:13px;height:1.7px;background:#5e5a48;opacity:0.5"></div><div class="a" style="left:14px;top:52.800000000000004px;width:101px;height:1.7px;background:#5e5a48;opacity:0.5"></div><div class="a" style="left:14px;top:55.7px;width:103px;height:1.7px;background:#5e5a48;opacity:0.5"></div><div class="a" style="left:14px;top:58.60000000000001px;width:100px;height:1.7px;background:#5e5a48;opacity:0.5"></div><div class="a" style="left:14px;top:61.2px;width:74px;height:1.7px;background:#5e5a48;opacity:0.5"></div><div class="a" style="left:14px;top:64.60000000000001px;width:104px;height:1.7px;background:#4a3a22;opacity:0.75"></div><div class="a" style="left:14px;top:68.00000000000001px;width:80px;height:1.7px;background:#4a3a22;opacity:0.75"></div><div class="a" style="left:10.6px;top:33.3px;width:1.8px;height:1.4px;background:#a83312;opacity:1"></div><div class="a" style="left:10.6px;top:53.0px;width:1.8px;height:1.4px;background:#a83312;opacity:1"></div><div class="a" style="left:10.6px;top:64.80000000000001px;width:1.8px;height:1.4px;background:#a83312;opacity:1"></div></div></div><div class="a" style="left:20.5px;top:144.2px;width:129.5px;height:73.6px;overflow:hidden;background:radial-gradient(ellipse 60% 62% at 50% 52%,#fcfcfa 0%,#fafbf6 35%,#f1f4e6 68%,#e8eed4 100%,#e2e9c8 125%);box-shadow:0 0 0 0.6px #8d8a6a"><div class="a" style="left:0;top:0px;width:129.5px;height:73.6px"><div class="a" style="left:0.8px;top:0;width:1.2px;height:100%;background:#6f6b52"></div><svg style="left:0;top:0" width="30" height="74" fill="none"><path d="M7,14 C5,30 5,44 9,56 C11,64 13,70 15,74" stroke="#8a866a" stroke-width="0.6"/><path d="M2.4,26 C4,44 8,60 13,74" stroke="#8a866a" stroke-width="0.6"/><path d="M2,36 C4,52 7,64 11,74" stroke="#cfd2c0" stroke-width="0.5"/></svg><svg style="left:0;top:7.6px" width="18" height="6"><polygon points="0,0 14.2,0 16.8,2.8 14.2,5.6 0,5.6" fill="#a83312"/></svg><div class="a" style="left:28.6px;top:8.6px;width:84.6px;height:2px;background:#3e4820;opacity:0.62"></div><div class="a" style="left:8px;top:14.8px;width:10px;height:1.2px;background:#5e5a48;opacity:0.5"></div><div class="a" style="left:8px;top:19.4px;width:1.8px;height:1.4px;background:#a83312;opacity:1"></div><div class="a" style="left:11.6px;top:19.2px;width:76px;height:1.7px;background:#5e5a48;opacity:0.55"></div><div class="a" style="left:8px;top:25.2px;width:1.8px;height:1.4px;background:#a83312;opacity:1"></div><div class="a" style="left:11.6px;top:25.0px;width:78px;height:1.7px;background:#5e5a48;opacity:0.55"></div><div class="a" style="left:8px;top:31px;width:1.8px;height:1.4px;background:#a83312;opacity:1"></div><div class="a" style="left:11.6px;top:30.8px;width:55px;height:1.7px;background:#5e5a48;opacity:0.55"></div><div class="a" style="left:58.7px;top:29.6px;width:61.2px;height:42px;background:#fdfdfd"></div><svg style="left:58.7px;top:29.6px" width="61.2" height="42"><polygon points="0,0 16,0 0,18" fill="#f0eaf6"/><polygon points="61,10 61,34 44,24" fill="#ece3f4"/><circle cx="5.8" cy="12.9" r="2.1" fill="#f0524a" opacity=".88"/><circle cx="9" cy="13.7" r="2.4" fill="#f58a3a" opacity=".88"/><circle cx="13.9" cy="11.2" r="5.7" fill="#f5e23a" opacity=".88"/><circle cx="18.5" cy="14.5" r="3.2" fill="#f7d43a" opacity=".88"/><circle cx="26.5" cy="10.4" r="7.7" fill="#17b45a" opacity=".88"/><circle cx="21.5" cy="15" r="3" fill="#6fd04a" opacity=".88"/><circle cx="39.1" cy="14.1" r="5.7" fill="#3f6fd8" opacity=".88"/><circle cx="42.4" cy="4.7" r="4.5" fill="#8a4fc8" opacity=".88"/><circle cx="33.8" cy="13.5" r="3" fill="#22b8c8" opacity=".88"/><circle cx="50.5" cy="12.1" r="4.9" fill="#f078b8" opacity=".88"/><circle cx="56.6" cy="12.1" r="2.4" fill="#f06a80" opacity=".88"/><circle cx="45.6" cy="17.4" r="2.3" fill="#b040c0" opacity=".88"/><path d="M25,17 L27.4,21.4 L29,17Z" fill="#17b45a" opacity=".88"/><path d="M36,19 L36.6,22.4 L39,19.4Z" fill="#3f6fd8" opacity=".88"/><g fill="#15110f"><circle cx="7" cy="27.9" r="1.55"/><ellipse cx="7" cy="33.2" rx="2.9" ry="3.9"/><path d="M5.4,36 L4.8,40.8 M8.6,36 L9.2,40.8" stroke="#111" stroke-width="0.9"/><circle cx="15.7" cy="27.9" r="1.55"/><ellipse cx="15.7" cy="33.2" rx="2.9" ry="3.9"/><path d="M14.1,36 L13.5,40.8 M17.3,36 L17.9,40.8" stroke="#111" stroke-width="0.9"/><circle cx="24.1" cy="27.9" r="1.55"/><ellipse cx="24.1" cy="33.2" rx="2.9" ry="3.9"/><path d="M22.5,36 L21.900000000000002,40.8 M25.700000000000003,36 L26.3,40.8" stroke="#111" stroke-width="0.9"/><circle cx="32" cy="27.9" r="1.55"/><ellipse cx="32" cy="33.2" rx="2.9" ry="3.9"/><path d="M30.4,36 L29.8,40.8 M33.6,36 L34.2,40.8" stroke="#111" stroke-width="0.9"/><circle cx="40.8" cy="27.9" r="1.55"/><ellipse cx="40.8" cy="33.2" rx="2.9" ry="3.9"/><path d="M39.199999999999996,36 L38.599999999999994,40.8 M42.4,36 L43.0,40.8" stroke="#111" stroke-width="0.9"/><circle cx="48.6" cy="27.9" r="1.55"/><ellipse cx="48.6" cy="33.2" rx="2.9" ry="3.9"/><path d="M47.0,36 L46.4,40.8 M50.2,36 L50.800000000000004,40.8" stroke="#111" stroke-width="0.9"/><circle cx="54.8" cy="27.9" r="1.55"/><ellipse cx="54.8" cy="33.2" rx="2.9" ry="3.9"/><path d="M53.199999999999996,36 L52.599999999999994,40.8 M56.4,36 L57.0,40.8" stroke="#111" stroke-width="0.9"/><rect x="7" y="33.4" width="48" height="2.6"/></g></svg></div></div><div class="a" style="left:20.5px;top:229px;width:129.5px;height:73.6px;overflow:hidden;background:radial-gradient(ellipse 60% 62% at 50% 52%,#fcfcfa 0%,#fafbf6 35%,#f1f4e6 68%,#e8eed4 100%,#e2e9c8 125%);box-shadow:0 0 0 0.6px #8d8a6a"><div class="a" style="left:0;top:0px;width:129.5px;height:73.6px"><div class="a" style="left:0.8px;top:0;width:1.2px;height:100%;background:#6f6b52"></div><svg style="left:0;top:0" width="30" height="74" fill="none"><path d="M7,14 C5,30 5,44 9,56 C11,64 13,70 15,74" stroke="#8a866a" stroke-width="0.6"/><path d="M2.4,26 C4,44 8,60 13,74" stroke="#8a866a" stroke-width="0.6"/><path d="M2,36 C4,52 7,64 11,74" stroke="#cfd2c0" stroke-width="0.5"/></svg><svg style="left:0;top:7.6px" width="18" height="6"><polygon points="0,0 14.2,0 16.8,2.8 14.2,5.6 0,5.6" fill="#a83312"/></svg><div class="a" style="left:29px;top:9.6px;width:70.6px;height:1.9px;background:#3e4820;opacity:0.6"></div><div class="a" style="left:29px;top:13.9px;width:60px;height:1.9px;background:#3e4820;opacity:0.6"></div><div class="a" style="left:58px;top:19px;width:62px;height:1.1px;background:#5e5a48;opacity:0.4"></div><div class="a" style="left:31px;top:24.2px;width:26px;height:1.4px;background:#5e5a48;opacity:0.5"></div><div class="a" style="left:72px;top:35.2px;width:45px;height:1.4px;background:#5e5a48;opacity:0.5"></div><div class="a" style="left:36.6px;top:62.2px;width:62px;height:1.4px;background:#5e5a48;opacity:0.5"></div><svg style="left:0;top:0" width="129" height="74"><circle cx="44.2" cy="38.1" r="9.6" fill="#5c6440"/><circle cx="60.4" cy="38" r="10.2" fill="#a83312"/><circle cx="52.3" cy="48.2" r="9.8" fill="#8fcf52" stroke="#5d8a34" stroke-width=".6"/><circle cx="52.2" cy="40" r="3.3" fill="#f5c21a"/><path d="M36.4,26.6 L46,34 M93.6,41.6 L67,47 M66,63 L55,56" stroke="#b8402a" stroke-width=".7" fill="none"/></svg></div></div><div class="a" style="left:18.3px;top:312.3px;width:134px;height:77.6px;background:#c93c1d;"></div><div class="a" style="left:20.3px;top:314.3px;width:130px;height:73.6px;overflow:hidden;background:radial-gradient(ellipse 60% 62% at 50% 52%,#fcfcfa 0%,#fafbf6 35%,#f1f4e6 68%,#e8eed4 100%,#e2e9c8 125%);box-shadow:0 0 0 0.6px #8d8a6a"><div class="a" style="left:0;top:0px;width:130px;height:73.6px"><div class="a" style="left:0.8px;top:0;width:1.2px;height:100%;background:#6f6b52"></div><svg style="left:0;top:0" width="30" height="74" fill="none"><path d="M7,14 C5,30 5,44 9,56 C11,64 13,70 15,74" stroke="#8a866a" stroke-width="0.6"/><path d="M2.4,26 C4,44 8,60 13,74" stroke="#8a866a" stroke-width="0.6"/><path d="M2,36 C4,52 7,64 11,74" stroke="#cfd2c0" stroke-width="0.5"/></svg><svg style="left:0;top:7.6px" width="18" height="6"><polygon points="0,0 14.2,0 16.8,2.8 14.2,5.6 0,5.6" fill="#a83312"/></svg><div class="a" style="left:28.685659411011525px;top:8.622279129321383px;width:88.37836107554418px;height:2px;background:#3e4820;opacity:0.6"></div><div class="a" style="left:14.094110115236877px;top:20.2291933418694px;width:28.188220230473753px;height:48.41741357234315px;background:#a63110;opacity:1"></div><div class="a" style="left:54.80121638924456px;top:19.234314980793854px;width:26.281370038412295px;height:50.40717029449424px;background:#a63110;opacity:1"></div><div class="a" style="left:93.51856594110116px;top:19.483034571062742px;width:26.36427656850192px;height:49.661011523687584px;background:#a63110;opacity:1"></div><div class="a" style="left:9.617157490396927px;top:15.75224071702945px;width:10.529129321382843px;height:10.363316261203586px;background:#dcc0c0;opacity:1"></div><div class="a" style="left:49.49519846350832px;top:15.75224071702945px;width:10.529129321382843px;height:10.363316261203586px;background:#dcc0c0;opacity:1"></div><div class="a" style="left:88.29545454545455px;top:15.75224071702945px;width:10.529129321382843px;height:10.363316261203586px;background:#dcc0c0;opacity:1"></div><div class="a" style="left:17.16165172855314px;top:25.20358514724712px;width:23.048015364916775px;height:1.5px;background:#f0d8c4;opacity:0.5"></div><div class="a" style="left:17.16165172855314px;top:27.868201024327785px;width:20.89244558258643px;height:1.5px;background:#f0d8c4;opacity:0.5"></div><div class="a" style="left:17.16165172855314px;top:30.53281690140845px;width:16.41549295774648px;height:1.5px;background:#f0d8c4;opacity:0.5"></div><div class="a" style="left:17.16165172855314px;top:33.197432778489116px;width:22.550576184379004px;height:1.5px;background:#f0d8c4;opacity:0.5"></div><div class="a" style="left:17.16165172855314px;top:35.86204865556978px;width:23.37964148527529px;height:1.5px;background:#f0d8c4;opacity:0.5"></div><div class="a" style="left:17.16165172855314px;top:38.52666453265046px;width:18.571062740076826px;height:1.5px;background:#f0d8c4;opacity:0.5"></div><div class="a" style="left:17.16165172855314px;top:41.19128040973112px;width:20.2291933418694px;height:1.5px;background:#f0d8c4;opacity:0.5"></div><div class="a" style="left:17.16165172855314px;top:43.855896286811785px;width:21.224071702944943px;height:1.5px;background:#f0d8c4;opacity:0.5"></div><div class="a" style="left:17.16165172855314px;top:46.52051216389245px;width:21.224071702944943px;height:1.5px;background:#f0d8c4;opacity:0.5"></div><div class="a" style="left:17.16165172855314px;top:49.18512804097311px;width:23.711267605633804px;height:1.5px;background:#f0d8c4;opacity:0.5"></div><div class="a" style="left:17.16165172855314px;top:51.849743918053775px;width:16.41549295774648px;height:1.5px;background:#f0d8c4;opacity:0.5"></div><div class="a" style="left:17.16165172855314px;top:54.514359795134446px;width:9.782970550576184px;height:1.5px;background:#f0d8c4;opacity:0.5"></div><div class="a" style="left:17.16165172855314px;top:57.17897567221512px;width:13.430857874519846px;height:1.5px;background:#f0d8c4;opacity:0.5"></div><div class="a" style="left:17.16165172855314px;top:59.84359154929577px;width:13.679577464788734px;height:1.5px;background:#f0d8c4;opacity:0.5"></div><div class="a" style="left:17.16165172855314px;top:62.508207426376444px;width:13.596670934699105px;height:1.5px;background:#f0d8c4;opacity:0.5"></div><div class="a" style="left:58.13405889884764px;top:24.208706786171575px;width:18.40524967989757px;height:1.5px;background:#f0d8c4;opacity:0.5"></div><div class="a" style="left:58.13405889884764px;top:26.72243277848912px;width:14.42573623559539px;height:1.5px;background:#f0d8c4;opacity:0.5"></div><div class="a" style="left:58.13405889884764px;top:29.236158770806657px;width:12.435979513444304px;height:1.5px;background:#f0d8c4;opacity:0.5"></div><div class="a" style="left:58.13405889884764px;top:31.749884763124204px;width:14.42573623559539px;height:1.5px;background:#f0d8c4;opacity:0.5"></div><div class="a" style="left:58.13405889884764px;top:34.26361075544174px;width:19.234314980793854px;height:1.5px;background:#f0d8c4;opacity:0.5"></div><div class="a" style="left:58.13405889884764px;top:36.777336747759286px;width:14.757362355953907px;height:1.5px;background:#f0d8c4;opacity:0.5"></div><div class="a" style="left:58.13405889884764px;top:39.29106274007683px;width:21.555697823303458px;height:1.5px;background:#f0d8c4;opacity:0.5"></div><div class="a" style="left:58.13405889884764px;top:41.80478873239437px;width:19.897567221510883px;height:1.5px;background:#f0d8c4;opacity:0.5"></div><div class="a" style="left:58.13405889884764px;top:44.3185147247119px;width:21.058258642765686px;height:1.5px;background:#f0d8c4;opacity:0.5"></div><div class="a" style="left:58.13405889884764px;top:46.83224071702945px;width:11.772727272727273px;height:1.5px;background:#f0d8c4;opacity:0.5"></div><div class="a" style="left:58.13405889884764px;top:49.345966709346996px;width:17.410371318822023px;height:1.5px;background:#f0d8c4;opacity:0.5"></div><div class="a" style="left:58.13405889884764px;top:51.859692701664535px;width:19.40012804097311px;height:1.5px;background:#f0d8c4;opacity:0.5"></div><div class="a" style="left:58.13405889884764px;top:54.37341869398208px;width:12.767605633802818px;height:1.5px;background:#f0d8c4;opacity:0.5"></div><div class="a" style="left:58.13405889884764px;top:56.88714468629963px;width:17.410371318822023px;height:1.5px;background:#f0d8c4;opacity:0.5"></div><div class="a" style="left:58.13405889884764px;top:59.40087067861716px;width:20.395006402048658px;height:1.5px;background:#f0d8c4;opacity:0.5"></div><div class="a" style="left:58.13405889884764px;top:61.9145966709347px;width:10.943661971830986px;height:1.5px;background:#f0d8c4;opacity:0.5"></div><div class="a" style="left:97.00064020486556px;top:24.54033290653009px;width:10.943661971830986px;height:1.5px;background:#f0d8c4;opacity:0.5"></div><div class="a" style="left:97.00064020486556px;top:27.050742637644046px;width:14.259923175416134px;height:1.5px;background:#f0d8c4;opacity:0.5"></div><div class="a" style="left:97.00064020486556px;top:29.561152368758px;width:12.104353393085788px;height:1.5px;background:#f0d8c4;opacity:0.5"></div><div class="a" style="left:97.00064020486556px;top:32.07156209987196px;width:15.254801536491678px;height:1.5px;background:#f0d8c4;opacity:0.5"></div><div class="a" style="left:97.00064020486556px;top:34.58197183098592px;width:16.249679897567223px;height:1.5px;background:#f0d8c4;opacity:0.5"></div><div class="a" style="left:97.00064020486556px;top:37.092381562099874px;width:14.923175416133164px;height:1.5px;background:#f0d8c4;opacity:0.5"></div><div class="a" style="left:97.00064020486556px;top:39.60279129321383px;width:13.92829705505762px;height:1.5px;background:#f0d8c4;opacity:0.5"></div><div class="a" style="left:97.00064020486556px;top:42.11320102432779px;width:17.244558258642765px;height:1.5px;background:#f0d8c4;opacity:0.5"></div><div class="a" style="left:97.00064020486556px;top:44.623610755441746px;width:12.933418693982075px;height:1.5px;background:#f0d8c4;opacity:0.5"></div><div class="a" style="left:97.00064020486556px;top:47.1340204865557px;width:18.23943661971831px;height:1.5px;background:#f0d8c4;opacity:0.5"></div><div class="a" style="left:97.00064020486556px;top:49.64443021766965px;width:15.420614596670935px;height:1.5px;background:#f0d8c4;opacity:0.5"></div><div class="a" style="left:97.00064020486556px;top:52.15483994878362px;width:13.26504481434059px;height:1.5px;background:#f0d8c4;opacity:0.5"></div><div class="a" style="left:97.00064020486556px;top:54.66524967989757px;width:19.897567221510883px;height:1.5px;background:#f0d8c4;opacity:0.5"></div><div class="a" style="left:97.00064020486556px;top:57.17565941101152px;width:7.461587708066582px;height:1.5px;background:#f0d8c4;opacity:0.5"></div><div class="a" style="left:10.446222791293215px;top:27.359154929577468px;width:2.8188220230473755px;height:28.85147247119078px;background:#1f3a2e;opacity:0.6"></div><div class="a" style="left:50.32426376440461px;top:27.359154929577468px;width:2.8188220230473755px;height:27.690781049935982px;background:#1f3a2e;opacity:0.6"></div><div class="a" style="left:89.12451984635084px;top:27.359154929577468px;width:2.8188220230473755px;height:34.73783610755442px;background:#1f3a2e;opacity:0.6"></div></div></div><div class="a" style="left:20.5px;top:399.2px;width:129.5px;height:73.6px;overflow:hidden;background:radial-gradient(ellipse 60% 62% at 50% 52%,#fcfcfa 0%,#fafbf6 35%,#f1f4e6 68%,#e8eed4 100%,#e2e9c8 125%);box-shadow:0 0 0 0.6px #8d8a6a"><div class="a" style="left:0;top:0px;width:129.5px;height:73.6px"><div class="a" style="left:0.8px;top:0;width:1.2px;height:100%;background:#6f6b52"></div><svg style="left:0;top:0" width="30" height="74" fill="none"><path d="M7,14 C5,30 5,44 9,56 C11,64 13,70 15,74" stroke="#8a866a" stroke-width="0.6"/><path d="M2.4,26 C4,44 8,60 13,74" stroke="#8a866a" stroke-width="0.6"/><path d="M2,36 C4,52 7,64 11,74" stroke="#cfd2c0" stroke-width="0.5"/></svg><svg style="left:0;top:7.6px" width="18" height="6"><polygon points="0,0 14.2,0 16.8,2.8 14.2,5.6 0,5.6" fill="#a83312"/></svg><div class="a" style="left:28px;top:9.6px;width:48.5px;height:1.9px;background:#3e4820;opacity:0.5"></div><div class="a" style="left:32.3px;top:25.2px;width:90px;height:1.8px;background:#5e5a48;opacity:0.4"></div><div class="a" style="left:32.3px;top:28.7px;width:88px;height:1.8px;background:#5e5a48;opacity:0.4"></div><div class="a" style="left:32.3px;top:32.2px;width:90px;height:1.8px;background:#5e5a48;opacity:0.4"></div><div class="a" style="left:32.3px;top:35.7px;width:48px;height:1.8px;background:#5e5a48;opacity:0.4"></div><div class="a" style="left:32.3px;top:42.800000000000004px;width:89px;height:1.8px;background:#5e5a48;opacity:0.62"></div><div class="a" style="left:32.3px;top:46.300000000000004px;width:86px;height:1.8px;background:#5e5a48;opacity:0.62"></div><div class="a" style="left:32.3px;top:49.800000000000004px;width:78px;height:1.8px;background:#5e5a48;opacity:0.62"></div><div class="a" style="left:32.3px;top:53.300000000000004px;width:48px;height:1.8px;background:#5e5a48;opacity:0.62"></div><div class="a" style="left:28px;top:25.4px;width:2px;height:1.4px;background:#a83312;opacity:1"></div><div class="a" style="left:28px;top:43.0px;width:2px;height:1.4px;background:#a83312;opacity:1"></div></div></div><div class="a" style="left:20.5px;top:484.9px;width:129.5px;height:73.6px;overflow:hidden;background:radial-gradient(ellipse 60% 62% at 50% 52%,#fcfcfa 0%,#fafbf6 35%,#f1f4e6 68%,#e8eed4 100%,#e2e9c8 125%);box-shadow:0 0 0 0.6px #8d8a6a"><div class="a" style="left:0;top:0px;width:129.5px;height:73.6px"><div class="a" style="left:0.8px;top:0;width:1.2px;height:100%;background:#6f6b52"></div><svg style="left:0;top:0" width="30" height="74" fill="none"><path d="M7,14 C5,30 5,44 9,56 C11,64 13,70 15,74" stroke="#8a866a" stroke-width="0.6"/><path d="M2.4,26 C4,44 8,60 13,74" stroke="#8a866a" stroke-width="0.6"/><path d="M2,36 C4,52 7,64 11,74" stroke="#cfd2c0" stroke-width="0.5"/></svg><svg style="left:0;top:7.6px" width="18" height="6"><polygon points="0,0 14.2,0 16.8,2.8 14.2,5.6 0,5.6" fill="#a83312"/></svg><div class="a" style="left:28px;top:9.1px;width:90.5px;height:1.9px;background:#3e4820;opacity:0.55"></div><div class="a" style="left:28px;top:12.9px;width:89px;height:1.9px;background:#3e4820;opacity:0.55"></div><div class="a" style="left:28px;top:16.700000000000003px;width:36.5px;height:1.9px;background:#3e4820;opacity:0.55"></div><div class="a" style="left:32.3px;top:24.7px;width:85px;height:1.8px;background:#5e5a48;opacity:0.55"></div><div class="a" style="left:32.3px;top:28.5px;width:84px;height:1.8px;background:#5e5a48;opacity:0.55"></div><div class="a" style="left:32.3px;top:32.300000000000004px;width:83px;height:1.8px;background:#5e5a48;opacity:0.55"></div><div class="a" style="left:32.3px;top:36.1px;width:80px;height:1.8px;background:#5e5a48;opacity:0.55"></div><div class="a" style="left:32.3px;top:47.300000000000004px;width:84px;height:1.8px;background:#5e5a48;opacity:0.55"></div><div class="a" style="left:32.3px;top:51.1px;width:83px;height:1.8px;background:#5e5a48;opacity:0.55"></div><div class="a" style="left:32.3px;top:54.6px;width:85px;height:1.8px;background:#5e5a48;opacity:0.55"></div><div class="a" style="left:32.3px;top:58.400000000000006px;width:11px;height:1.8px;background:#5e5a48;opacity:0.55"></div><div class="a" style="left:28px;top:24.9px;width:2px;height:1.4px;background:#a83312;opacity:1"></div><div class="a" style="left:28px;top:47.5px;width:2px;height:1.4px;background:#a83312;opacity:1"></div></div></div><div class="a" style="left:161.5px;top:90.5px;width:8px;height:7px;background:#cfcfcf;"></div><svg style="left:163.3px;top:92.8px" width="4.4" height="2.6"><polygon points="0,2.6 2.2,0 4.4,2.6" fill="#444"/></svg><div class="a" style="left:161.5px;top:568px;width:8px;height:7px;background:#cfcfcf;"></div><svg style="left:163.3px;top:570.3000000000001px" width="4.4" height="2.6"><polygon points="0,0 4.4,0 2.2,2.6" fill="#444"/></svg><div class="a" style="left:1083.5px;top:90px;width:8px;height:7.5px;background:#cfcfcf;"></div><svg style="left:1085.3px;top:92.5px" width="4.4" height="2.6"><polygon points="0,2.6 2.2,0 4.4,2.6" fill="#444"/></svg><div class="a" style="left:1083.5px;top:512px;width:8px;height:7px;background:#cfcfcf;"></div><svg style="left:1085.3px;top:514.3000000000001px" width="4.4" height="2.6"><polygon points="0,0 4.4,0 2.2,2.6" fill="#444"/></svg><svg style="left:1085.3px;top:521.5px" width="4.4" height="5"><polygon points="0,2.2 2.2,0 4.4,2.2" fill="#333"/><polygon points="0,4.8 2.2,2.6 4.4,4.8" fill="#333"/></svg><svg style="left:1085.3px;top:530.5px" width="4.4" height="5"><polygon points="0,0 2.2,2.2 4.4,0" fill="#333"/><polygon points="0,2.6 2.2,4.8 4.4,2.6" fill="#333"/></svg><svg style="left:55px;top:578.5px" width="9" height="8"><path d="M0.6,0.8 H3.4 L4.4,1.6 V7 L3.4,6.4 H0.6 Z" fill="none" stroke="#eee" stroke-width="0.8"/><path d="M4.4,1.6 L5.4,0.8 H7 V4" fill="none" stroke="#eee" stroke-width="0.8"/><path d="M5.4,6 L6.4,7.2 L8.4,4.6" fill="none" stroke="#eee" stroke-width="0.8"/></svg><svg style="left:796.5px;top:578.5px" width="7" height="8"><path d="M3.3,0 L5.2,2 H1.4Z" fill="#e8e8e8"/><path d="M0,3.4 H6.6 M0,5.2 H6.6 M0,7 H6.6" stroke="#e0e0e0" stroke-width="0.9"/></svg><svg style="left:842.3px;top:578px" width="8" height="8"><path d="M0,0 H7.8 V5.4 H3.4 L1.6,7.6 V5.4 H0 Z" fill="#eee"/></svg><div class="a" style="left:892px;top:576px;width:21px;height:13px;background:#383838;"></div><svg style="left:898.4px;top:578.4px" width="9" height="8"><rect x="0.5" y="0.5" width="8" height="7" fill="none" stroke="#fff" stroke-width="1"/><rect x="0.5" y="0.5" width="2.2" height="7" fill="#fff"/><rect x="4" y="1.8" width="3.4" height="2.4" fill="#fff"/></svg><svg style="left:920px;top:578.4px" width="8" height="8"><rect x="0" y="0" width="3.4" height="3.2" fill="#f0f0f0"/><rect x="4.6" y="0" width="3.4" height="3.2" fill="#f0f0f0"/><rect x="0" y="4.6" width="3.4" height="3.2" fill="#f0f0f0"/><rect x="4.6" y="4.6" width="3.4" height="3.2" fill="#f0f0f0"/></svg><svg style="left:941.5px;top:578.4px" width="8.4" height="8"><path d="M0.4,0.8 C2,0.2 3.4,0.6 4.2,1.4 C5,0.6 6.4,0.2 8,0.8 V7 C6.4,6.4 5,6.8 4.2,7.6 C3.4,6.8 2,6.4 0.4,7 Z" fill="#bdbdbd"/><path d="M4.2,1.4 V7.6" stroke="#575757" stroke-width="0.7"/></svg><svg style="left:964px;top:578.2px" width="7.4" height="8.4"><rect x="0" y="0" width="7.4" height="1.2" fill="#ddd"/><rect x="0.8" y="1.2" width="5.8" height="3.6" fill="none" stroke="#ddd" stroke-width="0.9"/><path d="M3.7,4.8 V7.4 M1.8,8 H5.6" stroke="#ddd" stroke-width="0.9"/></svg><div class="a" style="left:981px;top:582.2px;width:3.2px;height:1px;background:#eee;"></div><div class="a" style="left:987px;top:582.3px;width:56.5px;height:0.9px;background:#b0b0b0;"></div><div class="a" style="left:1014.6px;top:579px;width:2.6px;height:7px;background:#f2f2f2;"></div><svg style="left:1045.5px;top:580.3px" width="4.6" height="4.6"><path d="M2.3,0 V4.6 M0,2.3 H4.6" stroke="#f0f0f0" stroke-width="1"/></svg><svg style="left:1081px;top:578.2px" width="8.6" height="8.6"><rect x="0.5" y="0.5" width="7.6" height="7.6" fill="none" stroke="#eee" stroke-width="0.9"/><path d="M2,2 L3.4,3.4 M6.6,2 L5.2,3.4 M2,6.6 L3.4,5.2 M6.6,6.6 L5.2,5.2" stroke="#eee" stroke-width="0.9"/><path d="M1.6,3 V1.6 H3 M5.6,1.6 H7 V3 M7,5.6 V7 H5.6 M3,7 H1.6 V5.6" fill="none" stroke="#eee" stroke-width="0.7"/></svg><div class="a" style="left:1.5px;top:592px;width:28px;height:20.5px;background:#d4d0c8;box-shadow:inset -1px -1px 0 #404040,inset 1px 1px 0 #fff,inset -2px -2px 0 #808080"></div><svg style="left:3.6px;top:597px" width="9" height="9"><path d="M0.6,2 C2,1 3,1 4.2,1.8 L3.6,4.4 C2.6,3.8 1.4,3.8 0.2,4.6Z" fill="#e0452c"/><path d="M4.8,2 C6,2.8 7.2,2.6 8.6,1.8 L8,4.4 C6.8,5.2 5.6,5.2 4.2,4.6Z" fill="#5aa02c"/><path d="M0,5.2 C1.2,4.4 2.4,4.4 3.4,5 L2.8,7.8 C1.8,7.2 0.8,7.2 -0.4,8Z" fill="#2a6fd0"/><path d="M4,5.2 C5.4,5.8 6.6,5.8 7.8,5 L7.2,7.8 C6,8.6 4.8,8.6 3.4,7.8Z" fill="#f0b81c"/></svg><div class="a" style="left:30.8px;top:593px;width:90.5px;height:17.6px;background:#efefef;box-shadow:inset 1px 1px 0 #9a9a9a"></div><svg style="left:33px;top:595.5px" width="10" height="11"><circle cx="5" cy="6" r="3.6" fill="none" stroke="#1e86e6" stroke-width="1.8"/><path d="M2,6.2 H8.4" stroke="#1e86e6" stroke-width="1.4"/><path d="M6,9.6 L8.8,8" stroke="#fff" stroke-width="1.6"/><path d="M0.6,4.4 C2,0.6 7,-0.6 9.6,1.6 C7,0.8 3.4,1.6 1.6,5Z" fill="#1e86e6"/></svg><div class="a" style="left:121.5px;top:593px;width:28.6px;height:17.6px;background:#2a8af0;"></div><svg style="left:160.5px;top:592.5px" width="18" height="19"><circle cx="9" cy="10.4" r="5.6" fill="none" stroke="#35a8e8" stroke-width="3"/><path d="M4,10.6 H14.6" stroke="#35a8e8" stroke-width="2.4"/><path d="M10,16.4 L15,13.4" stroke="#d4d0c8" stroke-width="2.6"/><path d="M1,8 C3,1 12,-1 16.6,3 C12,1.6 5.6,3.2 2.4,9.6Z" fill="#f3c53a"/></svg><svg style="left:187.5px;top:594.5px" width="17" height="15"><rect x="0.5" y="0.5" width="16" height="14" rx="1.5" fill="#4a9fd8"/><rect x="2.4" y="2.4" width="12.2" height="10.2" rx="1" fill="#bfe0f4"/><circle cx="8.5" cy="7.5" r="4.6" fill="#f28a1e"/><polygon points="7,5 11.4,7.5 7,10" fill="#fff"/></svg><div class="a" style="left:212px;top:591.5px;width:26.5px;height:21.5px;background:#d4d0c8;box-shadow:inset 1px 1px 0 #fff,inset -1px -1px 0 #707070"></div><svg style="left:216px;top:594px" width="21" height="18"><path d="M1,3 H8 L9.6,5 H19.6 V16.6 H1 Z" fill="#f2d063"/><rect x="3.4" y="6" width="13.6" height="6" fill="#f7e59a"/><path d="M2,9 H18.6 V16.6 H2 Z" fill="#7ec0ea"/><rect x="6.6" y="11.6" width="7" height="5" fill="#b6dbf2"/></svg><svg style="left:244.5px;top:592.5px" width="19" height="19"><ellipse cx="9.4" cy="9.6" rx="8.8" ry="8.8" fill="#e2202c"/><ellipse cx="9.4" cy="9.6" rx="3.6" ry="6" fill="#fdf6f4"/></svg><svg style="left:273.3px;top:592.6px" width="18" height="18" viewBox="0 0 18 18"><circle cx="9" cy="9" r="8.6" fill="#e8453c"/><path d="M9,9 L1.6,4.6 A8.6,8.6 0 0 0 5,16.6 Z" fill="#34a853"/><path d="M9,9 L5,16.6 A8.6,8.6 0 0 0 17.6,9 Z" fill="#fbc116"/><path d="M9,9 L17.6,9 A8.6,8.6 0 0 0 16.4,4.6 L9,4.6Z" fill="#e8453c"/><path d="M9,9 L5,16.6 A8.6,8.6 0 0 1 1.6,4.6Z" fill="#34a853"/><circle cx="9" cy="9" r="4.1" fill="#fff"/><circle cx="9" cy="9" r="3.2" fill="#4a8af4"/></svg><svg style="left:301.5px;top:593.5px" width="18" height="17"><rect x="7" y="2" width="10.4" height="13" fill="#fff" stroke="#2c8a4e" stroke-width="0.8"/><path d="M9,4.4 H16 M9,7 H16 M9,9.6 H16 M9,12.2 H16 M12.6,2.4 V14.6" stroke="#2c8a4e" stroke-width="0.8"/><path d="M0.6,1.8 L10.4,0.2 V16.8 L0.6,15.2Z" fill="#1f7244"/><path d="M3.2,5.4 L7.6,11.6 M7.6,5.4 L3.2,11.6" stroke="#fff" stroke-width="1.5"/></svg><div class="a" style="left:326px;top:591.5px;width:26.5px;height:21.5px;background:#d4d0c8;box-shadow:inset 1px 1px 0 #fff,inset -1px -1px 0 #707070"></div><svg style="left:329.8px;top:593.5px" width="18" height="17"><rect x="7" y="2" width="10.4" height="13" fill="#fff" stroke="#2b579a" stroke-width="0.8"/><path d="M11.4,4.6 H16 M11.4,7 H16 M11.4,9.4 H16 M11.4,11.8 H16" stroke="#2b579a" stroke-width="0.9"/><path d="M0.6,1.8 L10.4,0.2 V16.8 L0.6,15.2Z" fill="#2b579a"/><path d="M2.6,5.6 L3.8,11.4 L5.4,6.6 L7,11.4 L8.2,5.6" fill="none" stroke="#fff" stroke-width="1.2"/></svg><div class="a" style="left:354px;top:590.5px;width:27.5px;height:23px;background:#f4f2ee;box-shadow:inset 1px 1px 0 #606060,inset -1px -1px 0 #fff"></div><svg style="left:357.6px;top:593.5px" width="19" height="17"><rect x="7" y="2" width="11" height="13" fill="#fff" stroke="#d24726" stroke-width="0.8"/><circle cx="13.6" cy="6.6" r="2.8" fill="none" stroke="#d24726" stroke-width="1.2"/><path d="M11,11 H16.6 M11,13 H16.6" stroke="#d24726" stroke-width="0.8"/><path d="M0.6,1.8 L10.4,0.2 V16.8 L0.6,15.2Z" fill="#d24726"/><path d="M3.8,12 V5.4 H5.8 C8.4,5.4 8.4,9 5.8,9 H3.8" fill="none" stroke="#fff" stroke-width="1.4"/></svg><svg style="left:386.6px;top:592.6px" width="18" height="18" viewBox="0 0 18 18"><circle cx="9" cy="9" r="8.6" fill="#e8453c"/><path d="M9,9 L1.6,4.6 A8.6,8.6 0 0 0 5,16.6 Z" fill="#34a853"/><path d="M9,9 L5,16.6 A8.6,8.6 0 0 0 17.6,9 Z" fill="#fbc116"/><path d="M9,9 L17.6,9 A8.6,8.6 0 0 0 16.4,4.6 L9,4.6Z" fill="#e8453c"/><path d="M9,9 L5,16.6 A8.6,8.6 0 0 1 1.6,4.6Z" fill="#34a853"/><circle cx="9" cy="9" r="4.1" fill="#fff"/><circle cx="9" cy="9" r="3.2" fill="#4a8af4"/></svg><svg style="left:396.5px;top:602.5px" width="9" height="9"><circle cx="4.5" cy="4.5" r="4.4" fill="#5b2d8e"/><text x="2.2" y="6.6" font-family="Liberation Sans,sans-serif" font-size="6" fill="#fff">п</text></svg><div class="a" style="left:987.5px;top:591.5px;width:105px;height:21.5px;background:#d4d0c8;box-shadow:inset 1px 1px 0 #808080,inset -1px -1px 0 #fff"></div><svg style="left:990.5px;top:598.5px" width="4" height="5"><path d="M0.2,2.2 L2,0.4 L3.8,2.2 M0.2,4.6 L2,2.8 L3.8,4.6" fill="none" stroke="#111" stroke-width="0.9"/></svg><svg style="left:1000.5px;top:596px" width="11" height="11"><path d="M1,1 H5 V3 H7 V9 H1 Z" fill="#f4f4f4" stroke="#7a8a7a" stroke-width="0.8"/><circle cx="7.4" cy="7.6" r="2.3" fill="#fff" stroke="#e0303a" stroke-width="1.1"/></svg><svg style="left:1014px;top:596px" width="10" height="10"><rect x="0.6" y="1" width="8.4" height="5.6" fill="#9aa" stroke="#6a7a7a" stroke-width="0.8"/><rect x="2.6" y="3.6" width="6.4" height="5" fill="#ccd6d6" stroke="#6a7a7a" stroke-width="0.7"/></svg><svg style="left:1027px;top:596px" width="12" height="11"><path d="M1,5.4 L5,1.6 V9.4 Z" fill="#dfe6df" stroke="#7a9a7a" stroke-width="0.7"/><circle cx="7.8" cy="7.2" r="2.3" fill="#fff" stroke="#e0303a" stroke-width="1.1"/></svg><div class="a" style="left:1081px;top:599px;width:8.6px;height:6.6px;background:#2a7fe0;box-shadow:inset 0 -1.2px 0 #1a4fa0"></div><div id="tx" style="position:absolute;left:0;top:0;width:1092px;height:614px;will-change:transform"><span class="t" style="left:410.3px;top:141px;font:bold 23.3px/28px 'Liberation Serif',serif;color:#4e5a28;transform:scaleX(1.0430);">Люди, які служать різним цілям у вашому житті</span><span class="t" style="left:371.1px;top:244px;font:bold 15.8px/19px 'Liberation Serif',serif;color:#f7ecdc;transform:scaleX(0.9911);">Ті, хто стоїть за</span><span class="t" style="left:341.5px;top:260px;font:bold 15.8px/19px 'Liberation Serif',serif;color:#f7ecdc;transform:scaleX(0.9828);">вас горою у важкі</span><span class="t" style="left:341.5px;top:276px;font:bold 15.8px/19px 'Liberation Serif',serif;color:#f7ecdc;transform:scaleX(1.0033);">часи. Ці люди</span><span class="t" style="left:341.5px;top:292px;font:bold 15.8px/19px 'Liberation Serif',serif;color:#f7ecdc;transform:scaleX(0.9965);">завжди прикриють</span><span class="t" style="left:341.5px;top:308px;font:bold 15.8px/19px 'Liberation Serif',serif;color:#f7ecdc;transform:scaleX(0.9661);">вашу спину. У житті</span><span class="t" style="left:341.5px;top:324px;font:bold 15.8px/19px 'Liberation Serif',serif;color:#f7ecdc;transform:scaleX(1.0067);">має бути багато</span><span class="t" style="left:341.5px;top:340px;font:bold 15.8px/19px 'Liberation Serif',serif;color:#f7ecdc;transform:scaleX(1.0028);">інших людей, які</span><span class="t" style="left:341.5px;top:356px;font:bold 15.8px/19px 'Liberation Serif',serif;color:#f7ecdc;transform:scaleX(1.0031);">спонукають діяти</span><span class="t" style="left:341.5px;top:373px;font:bold 15.8px/19px 'Liberation Serif',serif;color:#f7ecdc;transform:scaleX(1.0198);">або називати речі</span><span class="t" style="left:341.5px;top:389px;font:bold 15.8px/19px 'Liberation Serif',serif;color:#f7ecdc;transform:scaleX(1.0065);">своїми іменами, але</span><span class="t" style="left:341.5px;top:405px;font:bold 15.8px/19px 'Liberation Serif',serif;color:#f7ecdc;transform:scaleX(1.0217);">нам необхідні</span><span class="t" style="left:341.5px;top:421px;font:bold 15.8px/19px 'Liberation Serif',serif;color:#f7ecdc;transform:scaleX(1.0049);">джерела</span><span class="t" style="left:341.5px;top:437px;font:bold 15.8px/19px 'Liberation Serif',serif;color:#f7ecdc;transform:scaleX(1.0590);">безумовної</span><span class="t" style="left:341.5px;top:453px;font:bold 15.8px/19px 'Liberation Serif',serif;color:#f7ecdc;transform:scaleX(0.9749);">підтримки і</span><span class="t" style="left:341.5px;top:469px;font:bold 15.8px/19px 'Liberation Serif',serif;color:#f7ecdc;transform:scaleX(1.0043);">прийняття.</span><span class="t" style="left:608px;top:239px;font:bold 14.8px/18px 'Liberation Serif',serif;color:#f7ecdc;transform:scaleX(0.9770);">Ті, хто з’єднує</span><span class="t" style="left:588.6px;top:254px;font:bold 14.8px/18px 'Liberation Serif',serif;color:#f7ecdc;transform:scaleX(1.0095);">вас з новими</span><span class="t" style="left:588.6px;top:269px;font:bold 14.8px/18px 'Liberation Serif',serif;color:#f7ecdc;transform:scaleX(0.9555);">людьми або</span><span class="t" style="left:588.6px;top:284px;font:bold 14.8px/18px 'Liberation Serif',serif;color:#f7ecdc;transform:scaleX(1.0048);">ресурсами за</span><span class="t" style="left:588.6px;top:300px;font:bold 14.8px/18px 'Liberation Serif',serif;color:#f7ecdc;transform:scaleX(1.0185);">межами існуючої</span><span class="t" style="left:588.6px;top:315px;font:bold 14.8px/18px 'Liberation Serif',serif;color:#f7ecdc;transform:scaleX(1.1097);">екосистеми.</span><span class="t" style="left:588.6px;top:330px;font:bold 14.8px/18px 'Liberation Serif',serif;color:#f7ecdc;transform:scaleX(1.0579);">Мостом може бути</span><span class="t" style="left:588.6px;top:345px;font:bold 14.8px/18px 'Liberation Serif',serif;color:#f7ecdc;transform:scaleX(1.0346);">той, хто запросив</span><span class="t" style="left:588.6px;top:360px;font:bold 14.8px/18px 'Liberation Serif',serif;color:#f7ecdc;transform:scaleX(0.9882);">вас у клуб, комітет,</span><span class="t" style="left:588.6px;top:375px;font:bold 14.8px/18px 'Liberation Serif',serif;color:#f7ecdc;transform:scaleX(1.0164);">спортивну</span><span class="t" style="left:588.6px;top:391px;font:bold 14.8px/18px 'Liberation Serif',serif;color:#f7ecdc;transform:scaleX(1.0093);">команду, чи хто</span><span class="t" style="left:588.6px;top:406px;font:bold 14.8px/18px 'Liberation Serif',serif;color:#f7ecdc;transform:scaleX(1.0126);">познайомив вас з</span><span class="t" style="left:588.6px;top:421px;font:bold 14.8px/18px 'Liberation Serif',serif;color:#f7ecdc;transform:scaleX(0.9930);">кимось, хто</span><span class="t" style="left:588.6px;top:436px;font:bold 14.8px/18px 'Liberation Serif',serif;color:#f7ecdc;transform:scaleX(1.0353);">зацікавлений у</span><span class="t" style="left:588.6px;top:451px;font:bold 14.8px/18px 'Liberation Serif',serif;color:#f7ecdc;transform:scaleX(1.0067);">просуванні ваших</span><span class="t" style="left:588.6px;top:466px;font:bold 14.8px/18px 'Liberation Serif',serif;color:#f7ecdc;transform:scaleX(1.0252);">ідей тощо</span><span class="t" style="left:842.7px;top:240px;font:bold 14.8px/18px 'Liberation Serif',serif;color:#f7ecdc;transform:scaleX(0.9665);">Агенти</span><span class="t" style="left:823px;top:256px;font:bold 14.8px/18px 'Liberation Serif',serif;color:#f7ecdc;transform:scaleX(1.0267);">позитивного</span><span class="t" style="left:823px;top:271px;font:bold 14.8px/18px 'Liberation Serif',serif;color:#f7ecdc;transform:scaleX(0.9813);">впливу, які</span><span class="t" style="left:823px;top:286px;font:bold 14.8px/18px 'Liberation Serif',serif;color:#f7ecdc;transform:scaleX(0.9740);">змушують вас</span><span class="t" style="left:823px;top:301px;font:bold 14.8px/18px 'Liberation Serif',serif;color:#f7ecdc;transform:scaleX(0.9949);">залишати зону</span><span class="t" style="left:823px;top:316px;font:bold 14.8px/18px 'Liberation Serif',serif;color:#f7ecdc;transform:scaleX(1.0037);">комфорту. Це</span><span class="t" style="left:823px;top:331px;font:bold 14.8px/18px 'Liberation Serif',serif;color:#f7ecdc;transform:scaleX(1.0015);">можуть бути</span><span class="t" style="left:823px;top:346px;font:bold 14.8px/18px 'Liberation Serif',serif;color:#f7ecdc;transform:scaleX(0.9920);">наставники або</span><span class="t" style="left:823px;top:362px;font:bold 14.8px/18px 'Liberation Serif',serif;color:#f7ecdc;transform:scaleX(1.0217);">друзі, набір</span><span class="t" style="left:823px;top:377px;font:bold 14.8px/18px 'Liberation Serif',serif;color:#f7ecdc;transform:scaleX(1.0051);">навичок або рис</span><span class="t" style="left:823px;top:392px;font:bold 14.8px/18px 'Liberation Serif',serif;color:#f7ecdc;transform:scaleX(0.9842);">характеру, які</span><span class="t" style="left:823px;top:407px;font:bold 14.8px/18px 'Liberation Serif',serif;color:#f7ecdc;transform:scaleX(1.0034);">радикально</span><span class="t" style="left:823px;top:422px;font:bold 14.8px/18px 'Liberation Serif',serif;color:#f7ecdc;transform:scaleX(1.0094);">відрізняються від</span><span class="t" style="left:823px;top:437px;font:bold 14.8px/18px 'Liberation Serif',serif;color:#f7ecdc;transform:scaleX(0.9576);">ваших.</span><span class="t" style="left:0;top:0;transform-origin:0 0;font:bold 29.6px/36px 'Liberation Serif',serif;color:#2b5a45;transform:translate(290.71px,436.30px) rotate(-90deg) scaleX(1.0460);">Люди-опори</span><span class="t" style="left:0;top:0;transform-origin:0 0;font:bold 29.6px/36px 'Liberation Serif',serif;color:#2b5a45;transform:translate(530.61px,429.80px) rotate(-90deg) scaleX(1.0162);">Люди-мости</span><span class="t" style="left:0;top:0;transform-origin:0 0;font:bold 29.6px/36px 'Liberation Serif',serif;color:#2b5a45;transform:translate(765.21px,472.50px) rotate(-90deg) scaleX(1.0109);">Люди-штовхачі</span><span class="t" style="left:471px;top:4px;font:normal 7.5px/9px 'Liberation Sans',sans-serif;color:#f4f4f4;transform:scaleX(0.9053);">Презентація Microsoft PowerPoint&nbsp; - &nbsp;PowerPoint</span><span class="t" style="left:8.75px;top:23px;font:normal 7.5px/9px 'Liberation Sans',sans-serif;color:#fff;transform:scaleX(0.8806);">Файл</span><span class="t" style="left:41.75px;top:23px;font:normal 7.5px/9px 'Liberation Sans',sans-serif;color:#262626;transform:scaleX(0.8939);">Основне</span><span class="t" style="left:84.25px;top:23px;font:normal 7.5px/9px 'Liberation Sans',sans-serif;color:#fff;transform:scaleX(0.8723);">Вставлення</span><span class="t" style="left:135.25px;top:23px;font:normal 7.5px/9px 'Liberation Sans',sans-serif;color:#fff;transform:scaleX(0.9295);">Конструктор</span><span class="t" style="left:190.5px;top:23px;font:normal 7.5px/9px 'Liberation Sans',sans-serif;color:#fff;transform:scaleX(0.8901);">Переходи</span><span class="t" style="left:236px;top:23px;font:normal 7.5px/9px 'Liberation Sans',sans-serif;color:#fff;transform:scaleX(0.9280);">Анімація</span><span class="t" style="left:279.25px;top:23px;font:normal 7.5px/9px 'Liberation Sans',sans-serif;color:#fff;transform:scaleX(0.8903);">Показ слайдів</span><span class="t" style="left:338.5px;top:23px;font:normal 7.5px/9px 'Liberation Sans',sans-serif;color:#fff;transform:scaleX(0.8846);">Рецензування</span><span class="t" style="left:397.25px;top:23px;font:normal 7.5px/9px 'Liberation Sans',sans-serif;color:#fff;transform:scaleX(0.8747);">Подання</span><span class="t" style="left:439.25px;top:23px;font:normal 7.5px/9px 'Liberation Sans',sans-serif;color:#fff;transform:scaleX(0.8987);">Довідка</span><span class="t" style="left:495px;top:23px;font:normal 7.5px/9px 'Liberation Sans',sans-serif;color:#fff;transform:scaleX(0.9227);">Скажіть, що потрібно зробити</span><span class="t" style="left:1026px;top:23px;font:normal 7.5px/9px 'Liberation Sans',sans-serif;color:#fff;transform:scaleX(0.9069);">Спільний доступ</span><span class="t" style="left:955px;top:4px;font:normal 7.5px/9px 'Liberation Sans',sans-serif;color:#262626;transform:scaleX(0.9628);">Увійти</span><span class="t" style="left:3.5px;top:60px;font:normal 7.5px/9px 'Liberation Sans',sans-serif;color:#262626;transform:scaleX(0.8666);">Вставити</span><span class="t" style="left:45.5px;top:40px;font:normal 7.5px/9px 'Liberation Sans',sans-serif;color:#262626;transform:scaleX(0.8801);">Вирізати</span><span class="t" style="left:45.5px;top:53px;font:normal 7.5px/9px 'Liberation Sans',sans-serif;color:#262626;transform:scaleX(0.9312);">Копіювати</span><span class="t" style="left:45.5px;top:66px;font:normal 7.5px/9px 'Liberation Sans',sans-serif;color:#262626;transform:scaleX(0.8981);">Формат за зразком</span><span class="t" style="left:30.5px;top:79px;font:normal 7.5px/9px 'Liberation Sans',sans-serif;color:#333;transform:scaleX(0.8596);">Буфер обміну</span><span class="t" style="left:115.5px;top:60px;font:normal 7.5px/9px 'Liberation Sans',sans-serif;color:#262626;transform:scaleX(0.8961);">Створити</span><span class="t" style="left:119.5px;top:69px;font:normal 7.5px/9px 'Liberation Sans',sans-serif;color:#262626;transform:scaleX(0.8383);">слайд</span><span class="t" style="left:159.5px;top:40px;font:normal 7.5px/9px 'Liberation Sans',sans-serif;color:#262626;transform:scaleX(0.9089);">Макет</span><span class="t" style="left:159.5px;top:53px;font:normal 7.5px/9px 'Liberation Sans',sans-serif;color:#262626;transform:scaleX(0.9153);">Скинути</span><span class="t" style="left:159.5px;top:66px;font:normal 7.5px/9px 'Liberation Sans',sans-serif;color:#262626;transform:scaleX(0.8907);">Розділ</span><span class="t" style="left:140.8px;top:79px;font:normal 7.5px/9px 'Liberation Sans',sans-serif;color:#333;transform:scaleX(0.8122);">Слайди</span><span class="t" style="left:271.6px;top:44px;font:normal 7.5px/9px 'Liberation Sans',sans-serif;color:#8e8e8e;transform:scaleX(0.7670);">18</span><span class="t" style="left:299.6px;top:45px;font:normal 8.2px/10px 'Liberation Sans',sans-serif;color:#555;transform:scaleX(0.9874);">A</span><span class="t" style="left:312.6px;top:46px;font:normal 7px/8px 'Liberation Sans',sans-serif;color:#555;transform:scaleX(0.9418);">A</span><span class="t" style="left:197.3px;top:62px;font:bold 8px/10px 'Liberation Sans',sans-serif;color:#4c4c4c;transform:scaleX(0.9814);">Ж</span><span class="t" style="left:210.5px;top:62px;font:bold 8px/10px 'Liberation Sans',sans-serif;color:#4c4c4c;font-style:italic;transform:scaleX(0.9549);">К</span><span class="t" style="left:223px;top:62px;font:bold 8px/10px 'Liberation Sans',sans-serif;color:#4c4c4c;transform:scaleX(0.9391);">П</span><span class="t" style="left:236.6px;top:62px;font:bold 8px/10px 'Liberation Sans',sans-serif;color:#4c4c4c;transform:scaleX(0.8234);">S</span><span class="t" style="left:246.4px;top:63px;font:normal 6.6px/8px 'Liberation Sans',sans-serif;color:#5c5c5c;transform:scaleX(0.7612);">abc</span><span class="t" style="left:259.4px;top:61px;font:normal 6.6px/8px 'Liberation Sans',sans-serif;color:#5c5c5c;transform:scaleX(0.9143);">AV</span><span class="t" style="left:278px;top:62px;font:normal 7.6px/9px 'Liberation Sans',sans-serif;color:#666;transform:scaleX(0.8605);">Aa</span><span class="t" style="left:322.6px;top:60px;font:normal 8.6px/10px 'Liberation Sans',sans-serif;color:#555;transform:scaleX(1.0289);">A</span><span class="t" style="left:251.2px;top:79px;font:normal 7.5px/9px 'Liberation Sans',sans-serif;color:#333;transform:scaleX(0.8749);">Шрифт</span><span class="t" style="left:449px;top:40px;font:normal 7.5px/9px 'Liberation Sans',sans-serif;color:#8c8c8c;transform:scaleX(0.9160);">Напрямок тексту</span><span class="t" style="left:449px;top:53px;font:normal 7.5px/9px 'Liberation Sans',sans-serif;color:#8c8c8c;transform:scaleX(0.8727);">Вирівняти текст</span><span class="t" style="left:449px;top:67px;font:normal 7.5px/9px 'Liberation Sans',sans-serif;color:#8c8c8c;transform:scaleX(0.8995);">Перетворити на об’єкт SmartArt</span><span class="t" style="left:436.3px;top:79px;font:normal 7.5px/9px 'Liberation Sans',sans-serif;color:#333;transform:scaleX(0.8790);">Абзац</span><span class="t" style="left:644px;top:59px;font:normal 7.5px/9px 'Liberation Sans',sans-serif;color:#262626;transform:scaleX(0.8883);">Упорядкувати</span><span class="t" style="left:689.5px;top:59px;font:normal 7.5px/9px 'Liberation Sans',sans-serif;color:#8c8c8c;transform:scaleX(0.8934);">Експрес-</span><span class="t" style="left:694.4px;top:68px;font:normal 7.5px/9px 'Liberation Sans',sans-serif;color:#8c8c8c;transform:scaleX(0.8093);">стилі</span><span class="t" style="left:731px;top:40px;font:normal 7.5px/9px 'Liberation Sans',sans-serif;color:#8c8c8c;transform:scaleX(0.9055);">Заливка фігури</span><span class="t" style="left:731px;top:53px;font:normal 7.5px/9px 'Liberation Sans',sans-serif;color:#8c8c8c;transform:scaleX(0.9029);">Контур фігури</span><span class="t" style="left:731px;top:66px;font:normal 7.5px/9px 'Liberation Sans',sans-serif;color:#8c8c8c;transform:scaleX(0.8747);">Ефекти для фігур</span><span class="t" style="left:655px;top:79px;font:normal 7.5px/9px 'Liberation Sans',sans-serif;color:#333;transform:scaleX(0.8797);">Малювання</span><span class="t" style="left:811px;top:40px;font:normal 7.5px/9px 'Liberation Sans',sans-serif;color:#262626;transform:scaleX(0.9120);">Знайти</span><span class="t" style="left:811px;top:53px;font:normal 7.5px/9px 'Liberation Sans',sans-serif;color:#262626;transform:scaleX(0.9211);">Замінити</span><span class="t" style="left:811px;top:66px;font:normal 7.5px/9px 'Liberation Sans',sans-serif;color:#262626;transform:scaleX(0.8429);">Виділити</span><span class="t" style="left:806px;top:79px;font:normal 7.5px/9px 'Liberation Sans',sans-serif;color:#333;transform:scaleX(0.8269);">Редагування</span><span class="t" style="left:2.8px;top:141px;font:normal 9.6px/12px 'Liberation Sans',sans-serif;color:#f6f6f6;transform:scaleX(0.7590);">13</span><span class="t" style="left:2.8px;top:226px;font:normal 9.6px/12px 'Liberation Sans',sans-serif;color:#f6f6f6;transform:scaleX(0.7590);">14</span><span class="t" style="left:2.8px;top:311px;font:normal 9.6px/12px 'Liberation Sans',sans-serif;color:#f6f6f6;transform:scaleX(0.7590);">15</span><span class="t" style="left:2.8px;top:396px;font:normal 9.6px/12px 'Liberation Sans',sans-serif;color:#f6f6f6;transform:scaleX(0.7590);">16</span><span class="t" style="left:2.8px;top:482px;font:normal 9.6px/12px 'Liberation Sans',sans-serif;color:#f6f6f6;transform:scaleX(0.7590);">17</span><span class="t" style="left:179.3px;top:554px;font:normal 8.6px/10px 'Liberation Sans',sans-serif;color:#f2f2f2;transform:scaleX(0.9469);">Нотатки до слайда</span><span class="t" style="left:4.8px;top:577px;font:normal 7.3px/9px 'Liberation Sans',sans-serif;color:#f2f2f2;transform:scaleX(0.8194);">Слайд 15 з 17</span><span class="t" style="left:73.6px;top:577px;font:normal 7.3px/9px 'Liberation Sans',sans-serif;color:#f2f2f2;transform:scaleX(0.9063);">російська</span><span class="t" style="left:806px;top:577px;font:normal 7.3px/9px 'Liberation Sans',sans-serif;color:#f2f2f2;transform:scaleX(0.9392);">Нотатки</span><span class="t" style="left:851.8px;top:577px;font:normal 7.3px/9px 'Liberation Sans',sans-serif;color:#f2f2f2;transform:scaleX(0.9530);">Примітки</span><span class="t" style="left:1055.8px;top:577px;font:normal 7.3px/9px 'Liberation Sans',sans-serif;color:#f2f2f2;transform:scaleX(0.8163);">108 %</span><span class="t" style="left:13px;top:597px;font:bold 7.4px/9px 'Liberation Sans',sans-serif;color:#000;transform:scaleX(0.8791);">Пуск</span><span class="t" style="left:45.5px;top:597px;font:normal 7.6px/9px 'Liberation Sans',sans-serif;color:#9a9a9a;transform:scaleX(0.9622);">Турбо VPN</span><span class="t" style="left:125.8px;top:597px;font:normal 7.6px/9px 'Liberation Sans',sans-serif;color:#fff;transform:scaleX(0.9229);">Найти</span><span class="t" style="left:976px;top:596px;font:normal 8px/10px 'Liberation Sans',sans-serif;color:#111;transform:scaleX(0.7910);">UK</span><span class="t" style="left:1053.3px;top:592px;font:normal 7.4px/9px 'Liberation Sans',sans-serif;color:#111;transform:scaleX(0.8108);">10:26</span><span class="t" style="left:1044.5px;top:601px;font:normal 7.4px/9px 'Liberation Sans',sans-serif;color:#111;transform:scaleX(0.8595);">06.04.2023</span></div></body></html>
